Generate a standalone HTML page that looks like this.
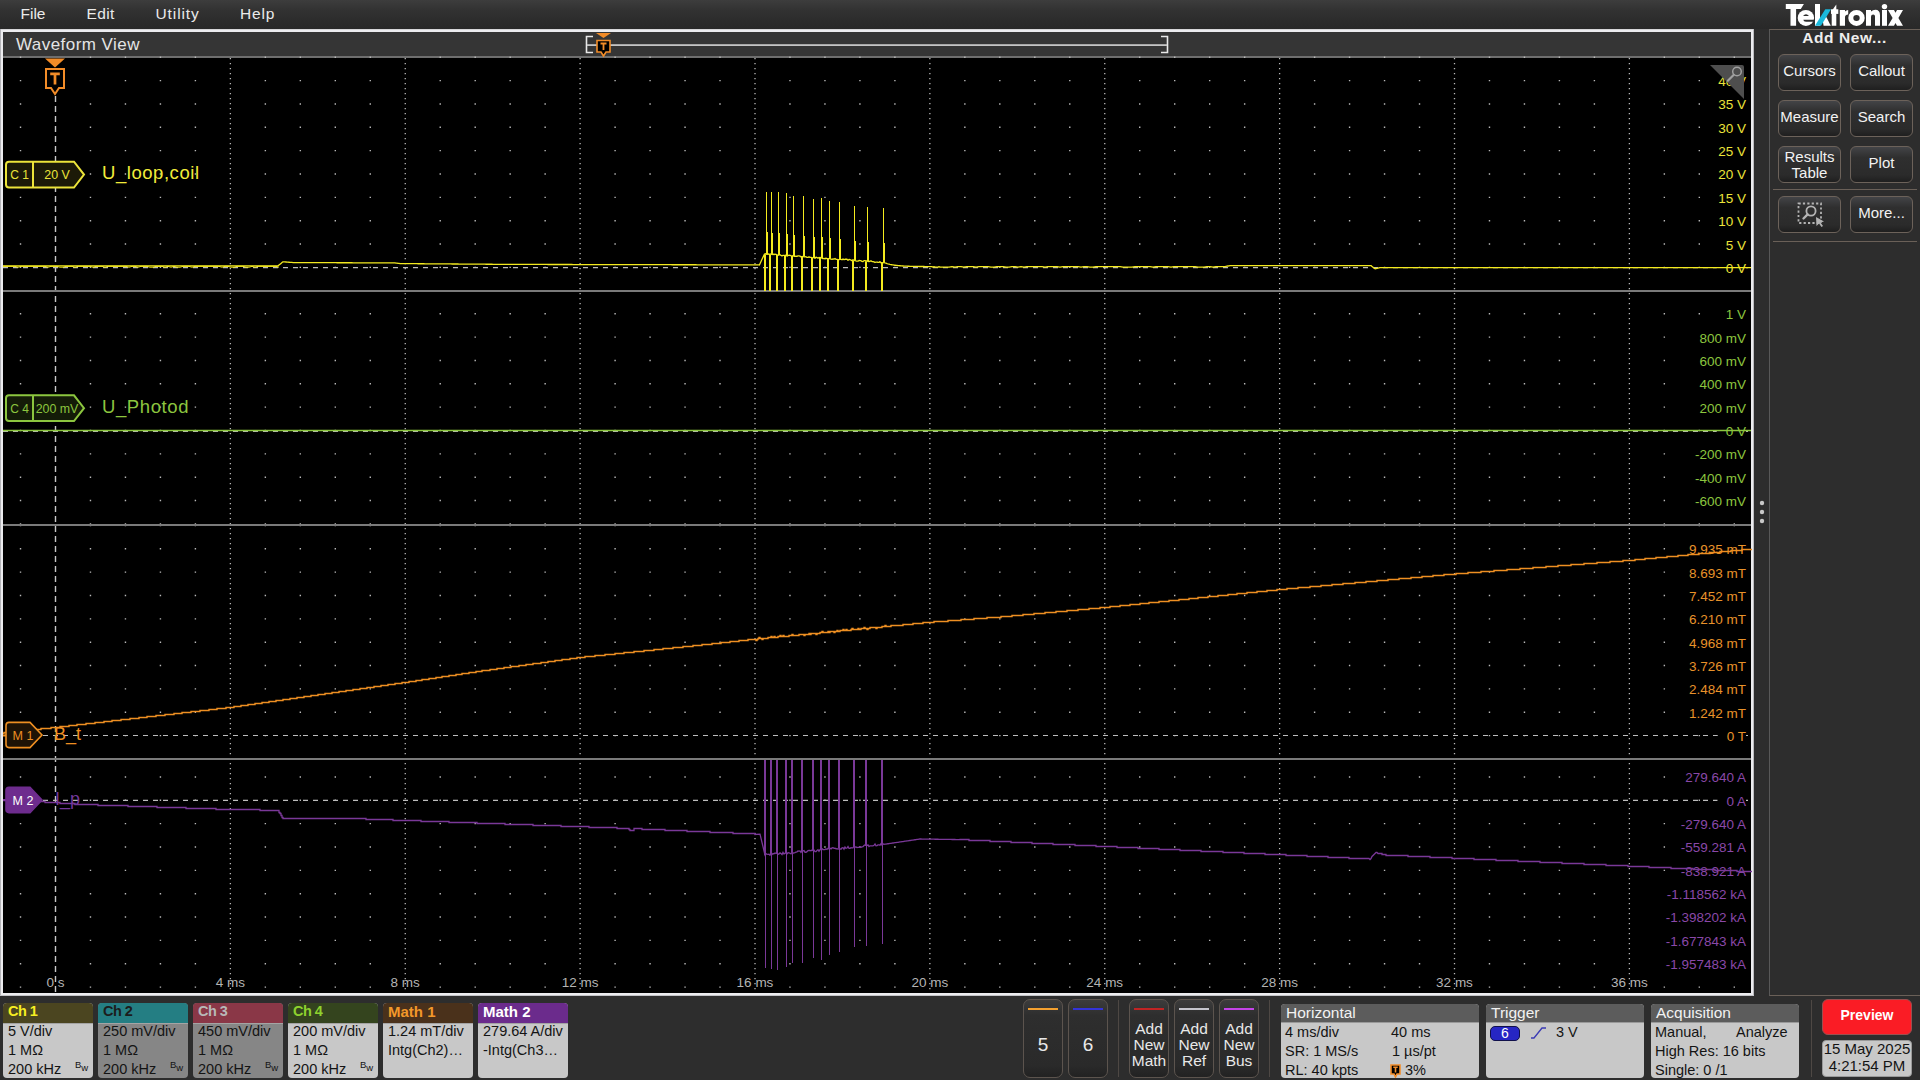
<!DOCTYPE html><html><head><meta charset="utf-8"><title>Waveform</title><style>
*{margin:0;padding:0;box-sizing:border-box}
html,body{width:1920px;height:1080px;overflow:hidden;background:#2d2d2d;font-family:"Liberation Sans",sans-serif;color:#e6e6e6}
.a{position:absolute}
#menu{left:0;top:0;width:1920px;height:29px;background:linear-gradient(#3d3d3d,#323232 35%,#2c2c2c 70%,#282828)}
#menu span{position:absolute;top:5px;font-size:15.5px;color:#eaeaea}
.btn{position:absolute;width:63px;height:37px;border:1px solid #6c625a;border-radius:6px;background:linear-gradient(#434447,#2f2f2f 30%,#2b2b2b 80%,#1f1f1f);color:#f2f2f2;font-size:15px;text-align:center;line-height:32px}
.bg{position:absolute;top:1003px;width:90px;height:75px;border-radius:4px;overflow:hidden;background:#c8c8c8}
.bg .h{height:20.5px;font-size:15px;font-weight:bold;line-height:17.5px;padding-left:5px;border-bottom:1.5px solid #a4a4a4}
.bg .r{position:absolute;left:5px;font-size:14.5px;color:#141414;white-space:nowrap}
.bb{position:absolute;top:999px;width:40px;height:79px;border:1px solid #5c544e;border-radius:7px;background:linear-gradient(#3c3c3c,#2e2e2e 20%,#2a2a2a 85%,#222);text-align:center;color:#e8e8e8}
.bb i{position:absolute;left:4px;right:4px;top:7.5px;height:2px}
.bb p{position:absolute;left:0;right:0;top:20.5px;font-size:15.5px;line-height:16px}
.pb{position:absolute;top:1004px;height:74px;border-radius:4px;overflow:hidden;background:#c8c8c8;color:#141414}
.pb .h{height:19px;background:#5c5c5c;color:#f2f2f2;font-size:15.5px;line-height:17px;padding-left:5px;border-bottom:1.5px solid #9a9a9a}
.pb .r{position:absolute;font-size:14.5px;white-space:nowrap}
</style></head><body><div id="menu" class="a"><span style="left:20.5px">File</span><span style="left:86.5px;letter-spacing:0.4px">Edit</span><span style="left:155.5px;letter-spacing:0.9px">Utility</span><span style="left:240px;letter-spacing:0.8px">Help</span></div><svg class="a" style="left:0;top:0" width="1920" height="1080" font-family='Liberation Sans, sans-serif'><rect x="0" y="29" width="1754" height="967" fill="#ececef"/><rect x="0" y="29" width="1754" height="1" fill="#d6d6d8"/><rect x="0" y="29" width="1" height="967" fill="#b4b4b8"/><rect x="1753" y="29" width="1" height="967" fill="#bcbcc0"/><rect x="0" y="995" width="1754" height="1" fill="#c4c4c8"/><rect x="3" y="32" width="1748" height="24" fill="#353535"/><rect x="3" y="56" width="1748" height="2" fill="#6e6e6e"/><rect x="3" y="58" width="1748" height="935" fill="#000"/><text x="16" y="49.5" font-size="17" letter-spacing="0.45" fill="#e4e4e4">Waveform View</text><path d="M593,36.5H586.5V52.5H593M1161,36.5H1167.5V52.5H1161" stroke="#e8e8e8" stroke-width="1.6" fill="none"/><rect x="587" y="44.2" width="580" height="1.8" fill="#c4c4c4"/><path d="M596,33H611L603.5,38Z" fill="#f28c28"/><path d="M597,40.5H610V52H606L603.5,56L601,52H597Z" fill="#000" stroke="#f28c28" stroke-width="1.6"/><path d="M600.5,43.5H606.5M603.5,43.5V50" stroke="#f28c28" stroke-width="1.8"/><rect x="3" y="290" width="1748" height="2" fill="#7a7a7a"/><rect x="3" y="524" width="1748" height="2" fill="#7a7a7a"/><rect x="3" y="758" width="1748" height="2" fill="#7a7a7a"/><path d="M19.82,56.55h1.4v1.4h-1.4zM89.77,56.55h1.4v1.4h-1.4zM124.75,56.55h1.4v1.4h-1.4zM159.73,56.55h1.4v1.4h-1.4zM194.7,56.55h1.4v1.4h-1.4zM264.65,56.55h1.4v1.4h-1.4zM299.63,56.55h1.4v1.4h-1.4zM334.6,56.55h1.4v1.4h-1.4zM369.58,56.55h1.4v1.4h-1.4zM439.53,56.55h1.4v1.4h-1.4zM474.5,56.55h1.4v1.4h-1.4zM509.48,56.55h1.4v1.4h-1.4zM544.45,56.55h1.4v1.4h-1.4zM614.4,56.55h1.4v1.4h-1.4zM649.38,56.55h1.4v1.4h-1.4zM684.35,56.55h1.4v1.4h-1.4zM719.32,56.55h1.4v1.4h-1.4zM789.27,56.55h1.4v1.4h-1.4zM824.25,56.55h1.4v1.4h-1.4zM859.23,56.55h1.4v1.4h-1.4zM894.2,56.55h1.4v1.4h-1.4zM964.15,56.55h1.4v1.4h-1.4zM999.12,56.55h1.4v1.4h-1.4zM1034.1,56.55h1.4v1.4h-1.4zM1069.08,56.55h1.4v1.4h-1.4zM1139.03,56.55h1.4v1.4h-1.4zM1174,56.55h1.4v1.4h-1.4zM1208.97,56.55h1.4v1.4h-1.4zM1243.95,56.55h1.4v1.4h-1.4zM1313.9,56.55h1.4v1.4h-1.4zM1348.88,56.55h1.4v1.4h-1.4zM1383.85,56.55h1.4v1.4h-1.4zM1418.83,56.55h1.4v1.4h-1.4zM1488.78,56.55h1.4v1.4h-1.4zM1523.75,56.55h1.4v1.4h-1.4zM1558.72,56.55h1.4v1.4h-1.4zM1593.7,56.55h1.4v1.4h-1.4zM1663.65,56.55h1.4v1.4h-1.4zM1698.62,56.55h1.4v1.4h-1.4zM1733.6,56.55h1.4v1.4h-1.4zM19.82,79.9h1.4v1.4h-1.4zM89.77,79.9h1.4v1.4h-1.4zM124.75,79.9h1.4v1.4h-1.4zM159.73,79.9h1.4v1.4h-1.4zM194.7,79.9h1.4v1.4h-1.4zM264.65,79.9h1.4v1.4h-1.4zM299.63,79.9h1.4v1.4h-1.4zM334.6,79.9h1.4v1.4h-1.4zM369.58,79.9h1.4v1.4h-1.4zM439.53,79.9h1.4v1.4h-1.4zM474.5,79.9h1.4v1.4h-1.4zM509.48,79.9h1.4v1.4h-1.4zM544.45,79.9h1.4v1.4h-1.4zM614.4,79.9h1.4v1.4h-1.4zM649.38,79.9h1.4v1.4h-1.4zM684.35,79.9h1.4v1.4h-1.4zM719.32,79.9h1.4v1.4h-1.4zM789.27,79.9h1.4v1.4h-1.4zM824.25,79.9h1.4v1.4h-1.4zM859.23,79.9h1.4v1.4h-1.4zM894.2,79.9h1.4v1.4h-1.4zM964.15,79.9h1.4v1.4h-1.4zM999.12,79.9h1.4v1.4h-1.4zM1034.1,79.9h1.4v1.4h-1.4zM1069.08,79.9h1.4v1.4h-1.4zM1139.03,79.9h1.4v1.4h-1.4zM1174,79.9h1.4v1.4h-1.4zM1208.97,79.9h1.4v1.4h-1.4zM1243.95,79.9h1.4v1.4h-1.4zM1313.9,79.9h1.4v1.4h-1.4zM1348.88,79.9h1.4v1.4h-1.4zM1383.85,79.9h1.4v1.4h-1.4zM1418.83,79.9h1.4v1.4h-1.4zM1488.78,79.9h1.4v1.4h-1.4zM1523.75,79.9h1.4v1.4h-1.4zM1558.72,79.9h1.4v1.4h-1.4zM1593.7,79.9h1.4v1.4h-1.4zM1663.65,79.9h1.4v1.4h-1.4zM1698.62,79.9h1.4v1.4h-1.4zM1733.6,79.9h1.4v1.4h-1.4zM19.82,103.25h1.4v1.4h-1.4zM89.77,103.25h1.4v1.4h-1.4zM124.75,103.25h1.4v1.4h-1.4zM159.73,103.25h1.4v1.4h-1.4zM194.7,103.25h1.4v1.4h-1.4zM264.65,103.25h1.4v1.4h-1.4zM299.63,103.25h1.4v1.4h-1.4zM334.6,103.25h1.4v1.4h-1.4zM369.58,103.25h1.4v1.4h-1.4zM439.53,103.25h1.4v1.4h-1.4zM474.5,103.25h1.4v1.4h-1.4zM509.48,103.25h1.4v1.4h-1.4zM544.45,103.25h1.4v1.4h-1.4zM614.4,103.25h1.4v1.4h-1.4zM649.38,103.25h1.4v1.4h-1.4zM684.35,103.25h1.4v1.4h-1.4zM719.32,103.25h1.4v1.4h-1.4zM789.27,103.25h1.4v1.4h-1.4zM824.25,103.25h1.4v1.4h-1.4zM859.23,103.25h1.4v1.4h-1.4zM894.2,103.25h1.4v1.4h-1.4zM964.15,103.25h1.4v1.4h-1.4zM999.12,103.25h1.4v1.4h-1.4zM1034.1,103.25h1.4v1.4h-1.4zM1069.08,103.25h1.4v1.4h-1.4zM1139.03,103.25h1.4v1.4h-1.4zM1174,103.25h1.4v1.4h-1.4zM1208.97,103.25h1.4v1.4h-1.4zM1243.95,103.25h1.4v1.4h-1.4zM1313.9,103.25h1.4v1.4h-1.4zM1348.88,103.25h1.4v1.4h-1.4zM1383.85,103.25h1.4v1.4h-1.4zM1418.83,103.25h1.4v1.4h-1.4zM1488.78,103.25h1.4v1.4h-1.4zM1523.75,103.25h1.4v1.4h-1.4zM1558.72,103.25h1.4v1.4h-1.4zM1593.7,103.25h1.4v1.4h-1.4zM1663.65,103.25h1.4v1.4h-1.4zM1698.62,103.25h1.4v1.4h-1.4zM1733.6,103.25h1.4v1.4h-1.4zM19.82,126.6h1.4v1.4h-1.4zM89.77,126.6h1.4v1.4h-1.4zM124.75,126.6h1.4v1.4h-1.4zM159.73,126.6h1.4v1.4h-1.4zM194.7,126.6h1.4v1.4h-1.4zM264.65,126.6h1.4v1.4h-1.4zM299.63,126.6h1.4v1.4h-1.4zM334.6,126.6h1.4v1.4h-1.4zM369.58,126.6h1.4v1.4h-1.4zM439.53,126.6h1.4v1.4h-1.4zM474.5,126.6h1.4v1.4h-1.4zM509.48,126.6h1.4v1.4h-1.4zM544.45,126.6h1.4v1.4h-1.4zM614.4,126.6h1.4v1.4h-1.4zM649.38,126.6h1.4v1.4h-1.4zM684.35,126.6h1.4v1.4h-1.4zM719.32,126.6h1.4v1.4h-1.4zM789.27,126.6h1.4v1.4h-1.4zM824.25,126.6h1.4v1.4h-1.4zM859.23,126.6h1.4v1.4h-1.4zM894.2,126.6h1.4v1.4h-1.4zM964.15,126.6h1.4v1.4h-1.4zM999.12,126.6h1.4v1.4h-1.4zM1034.1,126.6h1.4v1.4h-1.4zM1069.08,126.6h1.4v1.4h-1.4zM1139.03,126.6h1.4v1.4h-1.4zM1174,126.6h1.4v1.4h-1.4zM1208.97,126.6h1.4v1.4h-1.4zM1243.95,126.6h1.4v1.4h-1.4zM1313.9,126.6h1.4v1.4h-1.4zM1348.88,126.6h1.4v1.4h-1.4zM1383.85,126.6h1.4v1.4h-1.4zM1418.83,126.6h1.4v1.4h-1.4zM1488.78,126.6h1.4v1.4h-1.4zM1523.75,126.6h1.4v1.4h-1.4zM1558.72,126.6h1.4v1.4h-1.4zM1593.7,126.6h1.4v1.4h-1.4zM1663.65,126.6h1.4v1.4h-1.4zM1698.62,126.6h1.4v1.4h-1.4zM1733.6,126.6h1.4v1.4h-1.4zM19.82,149.95h1.4v1.4h-1.4zM89.77,149.95h1.4v1.4h-1.4zM124.75,149.95h1.4v1.4h-1.4zM159.73,149.95h1.4v1.4h-1.4zM194.7,149.95h1.4v1.4h-1.4zM264.65,149.95h1.4v1.4h-1.4zM299.63,149.95h1.4v1.4h-1.4zM334.6,149.95h1.4v1.4h-1.4zM369.58,149.95h1.4v1.4h-1.4zM439.53,149.95h1.4v1.4h-1.4zM474.5,149.95h1.4v1.4h-1.4zM509.48,149.95h1.4v1.4h-1.4zM544.45,149.95h1.4v1.4h-1.4zM614.4,149.95h1.4v1.4h-1.4zM649.38,149.95h1.4v1.4h-1.4zM684.35,149.95h1.4v1.4h-1.4zM719.32,149.95h1.4v1.4h-1.4zM789.27,149.95h1.4v1.4h-1.4zM824.25,149.95h1.4v1.4h-1.4zM859.23,149.95h1.4v1.4h-1.4zM894.2,149.95h1.4v1.4h-1.4zM964.15,149.95h1.4v1.4h-1.4zM999.12,149.95h1.4v1.4h-1.4zM1034.1,149.95h1.4v1.4h-1.4zM1069.08,149.95h1.4v1.4h-1.4zM1139.03,149.95h1.4v1.4h-1.4zM1174,149.95h1.4v1.4h-1.4zM1208.97,149.95h1.4v1.4h-1.4zM1243.95,149.95h1.4v1.4h-1.4zM1313.9,149.95h1.4v1.4h-1.4zM1348.88,149.95h1.4v1.4h-1.4zM1383.85,149.95h1.4v1.4h-1.4zM1418.83,149.95h1.4v1.4h-1.4zM1488.78,149.95h1.4v1.4h-1.4zM1523.75,149.95h1.4v1.4h-1.4zM1558.72,149.95h1.4v1.4h-1.4zM1593.7,149.95h1.4v1.4h-1.4zM1663.65,149.95h1.4v1.4h-1.4zM1698.62,149.95h1.4v1.4h-1.4zM1733.6,149.95h1.4v1.4h-1.4zM19.82,173.3h1.4v1.4h-1.4zM89.77,173.3h1.4v1.4h-1.4zM124.75,173.3h1.4v1.4h-1.4zM159.73,173.3h1.4v1.4h-1.4zM194.7,173.3h1.4v1.4h-1.4zM264.65,173.3h1.4v1.4h-1.4zM299.63,173.3h1.4v1.4h-1.4zM334.6,173.3h1.4v1.4h-1.4zM369.58,173.3h1.4v1.4h-1.4zM439.53,173.3h1.4v1.4h-1.4zM474.5,173.3h1.4v1.4h-1.4zM509.48,173.3h1.4v1.4h-1.4zM544.45,173.3h1.4v1.4h-1.4zM614.4,173.3h1.4v1.4h-1.4zM649.38,173.3h1.4v1.4h-1.4zM684.35,173.3h1.4v1.4h-1.4zM719.32,173.3h1.4v1.4h-1.4zM789.27,173.3h1.4v1.4h-1.4zM824.25,173.3h1.4v1.4h-1.4zM859.23,173.3h1.4v1.4h-1.4zM894.2,173.3h1.4v1.4h-1.4zM964.15,173.3h1.4v1.4h-1.4zM999.12,173.3h1.4v1.4h-1.4zM1034.1,173.3h1.4v1.4h-1.4zM1069.08,173.3h1.4v1.4h-1.4zM1139.03,173.3h1.4v1.4h-1.4zM1174,173.3h1.4v1.4h-1.4zM1208.97,173.3h1.4v1.4h-1.4zM1243.95,173.3h1.4v1.4h-1.4zM1313.9,173.3h1.4v1.4h-1.4zM1348.88,173.3h1.4v1.4h-1.4zM1383.85,173.3h1.4v1.4h-1.4zM1418.83,173.3h1.4v1.4h-1.4zM1488.78,173.3h1.4v1.4h-1.4zM1523.75,173.3h1.4v1.4h-1.4zM1558.72,173.3h1.4v1.4h-1.4zM1593.7,173.3h1.4v1.4h-1.4zM1663.65,173.3h1.4v1.4h-1.4zM1698.62,173.3h1.4v1.4h-1.4zM1733.6,173.3h1.4v1.4h-1.4zM19.82,196.65h1.4v1.4h-1.4zM89.77,196.65h1.4v1.4h-1.4zM124.75,196.65h1.4v1.4h-1.4zM159.73,196.65h1.4v1.4h-1.4zM194.7,196.65h1.4v1.4h-1.4zM264.65,196.65h1.4v1.4h-1.4zM299.63,196.65h1.4v1.4h-1.4zM334.6,196.65h1.4v1.4h-1.4zM369.58,196.65h1.4v1.4h-1.4zM439.53,196.65h1.4v1.4h-1.4zM474.5,196.65h1.4v1.4h-1.4zM509.48,196.65h1.4v1.4h-1.4zM544.45,196.65h1.4v1.4h-1.4zM614.4,196.65h1.4v1.4h-1.4zM649.38,196.65h1.4v1.4h-1.4zM684.35,196.65h1.4v1.4h-1.4zM719.32,196.65h1.4v1.4h-1.4zM789.27,196.65h1.4v1.4h-1.4zM824.25,196.65h1.4v1.4h-1.4zM859.23,196.65h1.4v1.4h-1.4zM894.2,196.65h1.4v1.4h-1.4zM964.15,196.65h1.4v1.4h-1.4zM999.12,196.65h1.4v1.4h-1.4zM1034.1,196.65h1.4v1.4h-1.4zM1069.08,196.65h1.4v1.4h-1.4zM1139.03,196.65h1.4v1.4h-1.4zM1174,196.65h1.4v1.4h-1.4zM1208.97,196.65h1.4v1.4h-1.4zM1243.95,196.65h1.4v1.4h-1.4zM1313.9,196.65h1.4v1.4h-1.4zM1348.88,196.65h1.4v1.4h-1.4zM1383.85,196.65h1.4v1.4h-1.4zM1418.83,196.65h1.4v1.4h-1.4zM1488.78,196.65h1.4v1.4h-1.4zM1523.75,196.65h1.4v1.4h-1.4zM1558.72,196.65h1.4v1.4h-1.4zM1593.7,196.65h1.4v1.4h-1.4zM1663.65,196.65h1.4v1.4h-1.4zM1698.62,196.65h1.4v1.4h-1.4zM1733.6,196.65h1.4v1.4h-1.4zM19.82,220h1.4v1.4h-1.4zM89.77,220h1.4v1.4h-1.4zM124.75,220h1.4v1.4h-1.4zM159.73,220h1.4v1.4h-1.4zM194.7,220h1.4v1.4h-1.4zM264.65,220h1.4v1.4h-1.4zM299.63,220h1.4v1.4h-1.4zM334.6,220h1.4v1.4h-1.4zM369.58,220h1.4v1.4h-1.4zM439.53,220h1.4v1.4h-1.4zM474.5,220h1.4v1.4h-1.4zM509.48,220h1.4v1.4h-1.4zM544.45,220h1.4v1.4h-1.4zM614.4,220h1.4v1.4h-1.4zM649.38,220h1.4v1.4h-1.4zM684.35,220h1.4v1.4h-1.4zM719.32,220h1.4v1.4h-1.4zM789.27,220h1.4v1.4h-1.4zM824.25,220h1.4v1.4h-1.4zM859.23,220h1.4v1.4h-1.4zM894.2,220h1.4v1.4h-1.4zM964.15,220h1.4v1.4h-1.4zM999.12,220h1.4v1.4h-1.4zM1034.1,220h1.4v1.4h-1.4zM1069.08,220h1.4v1.4h-1.4zM1139.03,220h1.4v1.4h-1.4zM1174,220h1.4v1.4h-1.4zM1208.97,220h1.4v1.4h-1.4zM1243.95,220h1.4v1.4h-1.4zM1313.9,220h1.4v1.4h-1.4zM1348.88,220h1.4v1.4h-1.4zM1383.85,220h1.4v1.4h-1.4zM1418.83,220h1.4v1.4h-1.4zM1488.78,220h1.4v1.4h-1.4zM1523.75,220h1.4v1.4h-1.4zM1558.72,220h1.4v1.4h-1.4zM1593.7,220h1.4v1.4h-1.4zM1663.65,220h1.4v1.4h-1.4zM1698.62,220h1.4v1.4h-1.4zM1733.6,220h1.4v1.4h-1.4zM19.82,243.35h1.4v1.4h-1.4zM89.77,243.35h1.4v1.4h-1.4zM124.75,243.35h1.4v1.4h-1.4zM159.73,243.35h1.4v1.4h-1.4zM194.7,243.35h1.4v1.4h-1.4zM264.65,243.35h1.4v1.4h-1.4zM299.63,243.35h1.4v1.4h-1.4zM334.6,243.35h1.4v1.4h-1.4zM369.58,243.35h1.4v1.4h-1.4zM439.53,243.35h1.4v1.4h-1.4zM474.5,243.35h1.4v1.4h-1.4zM509.48,243.35h1.4v1.4h-1.4zM544.45,243.35h1.4v1.4h-1.4zM614.4,243.35h1.4v1.4h-1.4zM649.38,243.35h1.4v1.4h-1.4zM684.35,243.35h1.4v1.4h-1.4zM719.32,243.35h1.4v1.4h-1.4zM789.27,243.35h1.4v1.4h-1.4zM824.25,243.35h1.4v1.4h-1.4zM859.23,243.35h1.4v1.4h-1.4zM894.2,243.35h1.4v1.4h-1.4zM964.15,243.35h1.4v1.4h-1.4zM999.12,243.35h1.4v1.4h-1.4zM1034.1,243.35h1.4v1.4h-1.4zM1069.08,243.35h1.4v1.4h-1.4zM1139.03,243.35h1.4v1.4h-1.4zM1174,243.35h1.4v1.4h-1.4zM1208.97,243.35h1.4v1.4h-1.4zM1243.95,243.35h1.4v1.4h-1.4zM1313.9,243.35h1.4v1.4h-1.4zM1348.88,243.35h1.4v1.4h-1.4zM1383.85,243.35h1.4v1.4h-1.4zM1418.83,243.35h1.4v1.4h-1.4zM1488.78,243.35h1.4v1.4h-1.4zM1523.75,243.35h1.4v1.4h-1.4zM1558.72,243.35h1.4v1.4h-1.4zM1593.7,243.35h1.4v1.4h-1.4zM1663.65,243.35h1.4v1.4h-1.4zM1698.62,243.35h1.4v1.4h-1.4zM1733.6,243.35h1.4v1.4h-1.4zM19.82,266.7h1.4v1.4h-1.4zM89.77,266.7h1.4v1.4h-1.4zM124.75,266.7h1.4v1.4h-1.4zM159.73,266.7h1.4v1.4h-1.4zM194.7,266.7h1.4v1.4h-1.4zM264.65,266.7h1.4v1.4h-1.4zM299.63,266.7h1.4v1.4h-1.4zM334.6,266.7h1.4v1.4h-1.4zM369.58,266.7h1.4v1.4h-1.4zM439.53,266.7h1.4v1.4h-1.4zM474.5,266.7h1.4v1.4h-1.4zM509.48,266.7h1.4v1.4h-1.4zM544.45,266.7h1.4v1.4h-1.4zM614.4,266.7h1.4v1.4h-1.4zM649.38,266.7h1.4v1.4h-1.4zM684.35,266.7h1.4v1.4h-1.4zM719.32,266.7h1.4v1.4h-1.4zM789.27,266.7h1.4v1.4h-1.4zM824.25,266.7h1.4v1.4h-1.4zM859.23,266.7h1.4v1.4h-1.4zM894.2,266.7h1.4v1.4h-1.4zM964.15,266.7h1.4v1.4h-1.4zM999.12,266.7h1.4v1.4h-1.4zM1034.1,266.7h1.4v1.4h-1.4zM1069.08,266.7h1.4v1.4h-1.4zM1139.03,266.7h1.4v1.4h-1.4zM1174,266.7h1.4v1.4h-1.4zM1208.97,266.7h1.4v1.4h-1.4zM1243.95,266.7h1.4v1.4h-1.4zM1313.9,266.7h1.4v1.4h-1.4zM1348.88,266.7h1.4v1.4h-1.4zM1383.85,266.7h1.4v1.4h-1.4zM1418.83,266.7h1.4v1.4h-1.4zM1488.78,266.7h1.4v1.4h-1.4zM1523.75,266.7h1.4v1.4h-1.4zM1558.72,266.7h1.4v1.4h-1.4zM1593.7,266.7h1.4v1.4h-1.4zM1663.65,266.7h1.4v1.4h-1.4zM1698.62,266.7h1.4v1.4h-1.4zM1733.6,266.7h1.4v1.4h-1.4zM19.82,290.05h1.4v1.4h-1.4zM89.77,290.05h1.4v1.4h-1.4zM124.75,290.05h1.4v1.4h-1.4zM159.73,290.05h1.4v1.4h-1.4zM194.7,290.05h1.4v1.4h-1.4zM264.65,290.05h1.4v1.4h-1.4zM299.63,290.05h1.4v1.4h-1.4zM334.6,290.05h1.4v1.4h-1.4zM369.58,290.05h1.4v1.4h-1.4zM439.53,290.05h1.4v1.4h-1.4zM474.5,290.05h1.4v1.4h-1.4zM509.48,290.05h1.4v1.4h-1.4zM544.45,290.05h1.4v1.4h-1.4zM614.4,290.05h1.4v1.4h-1.4zM649.38,290.05h1.4v1.4h-1.4zM684.35,290.05h1.4v1.4h-1.4zM719.32,290.05h1.4v1.4h-1.4zM789.27,290.05h1.4v1.4h-1.4zM824.25,290.05h1.4v1.4h-1.4zM859.23,290.05h1.4v1.4h-1.4zM894.2,290.05h1.4v1.4h-1.4zM964.15,290.05h1.4v1.4h-1.4zM999.12,290.05h1.4v1.4h-1.4zM1034.1,290.05h1.4v1.4h-1.4zM1069.08,290.05h1.4v1.4h-1.4zM1139.03,290.05h1.4v1.4h-1.4zM1174,290.05h1.4v1.4h-1.4zM1208.97,290.05h1.4v1.4h-1.4zM1243.95,290.05h1.4v1.4h-1.4zM1313.9,290.05h1.4v1.4h-1.4zM1348.88,290.05h1.4v1.4h-1.4zM1383.85,290.05h1.4v1.4h-1.4zM1418.83,290.05h1.4v1.4h-1.4zM1488.78,290.05h1.4v1.4h-1.4zM1523.75,290.05h1.4v1.4h-1.4zM1558.72,290.05h1.4v1.4h-1.4zM1593.7,290.05h1.4v1.4h-1.4zM1663.65,290.05h1.4v1.4h-1.4zM1698.62,290.05h1.4v1.4h-1.4zM1733.6,290.05h1.4v1.4h-1.4zM19.82,313.05h1.4v1.4h-1.4zM89.77,313.05h1.4v1.4h-1.4zM124.75,313.05h1.4v1.4h-1.4zM159.73,313.05h1.4v1.4h-1.4zM194.7,313.05h1.4v1.4h-1.4zM264.65,313.05h1.4v1.4h-1.4zM299.63,313.05h1.4v1.4h-1.4zM334.6,313.05h1.4v1.4h-1.4zM369.58,313.05h1.4v1.4h-1.4zM439.53,313.05h1.4v1.4h-1.4zM474.5,313.05h1.4v1.4h-1.4zM509.48,313.05h1.4v1.4h-1.4zM544.45,313.05h1.4v1.4h-1.4zM614.4,313.05h1.4v1.4h-1.4zM649.38,313.05h1.4v1.4h-1.4zM684.35,313.05h1.4v1.4h-1.4zM719.32,313.05h1.4v1.4h-1.4zM789.27,313.05h1.4v1.4h-1.4zM824.25,313.05h1.4v1.4h-1.4zM859.23,313.05h1.4v1.4h-1.4zM894.2,313.05h1.4v1.4h-1.4zM964.15,313.05h1.4v1.4h-1.4zM999.12,313.05h1.4v1.4h-1.4zM1034.1,313.05h1.4v1.4h-1.4zM1069.08,313.05h1.4v1.4h-1.4zM1139.03,313.05h1.4v1.4h-1.4zM1174,313.05h1.4v1.4h-1.4zM1208.97,313.05h1.4v1.4h-1.4zM1243.95,313.05h1.4v1.4h-1.4zM1313.9,313.05h1.4v1.4h-1.4zM1348.88,313.05h1.4v1.4h-1.4zM1383.85,313.05h1.4v1.4h-1.4zM1418.83,313.05h1.4v1.4h-1.4zM1488.78,313.05h1.4v1.4h-1.4zM1523.75,313.05h1.4v1.4h-1.4zM1558.72,313.05h1.4v1.4h-1.4zM1593.7,313.05h1.4v1.4h-1.4zM1663.65,313.05h1.4v1.4h-1.4zM1698.62,313.05h1.4v1.4h-1.4zM1733.6,313.05h1.4v1.4h-1.4zM19.82,336.4h1.4v1.4h-1.4zM89.77,336.4h1.4v1.4h-1.4zM124.75,336.4h1.4v1.4h-1.4zM159.73,336.4h1.4v1.4h-1.4zM194.7,336.4h1.4v1.4h-1.4zM264.65,336.4h1.4v1.4h-1.4zM299.63,336.4h1.4v1.4h-1.4zM334.6,336.4h1.4v1.4h-1.4zM369.58,336.4h1.4v1.4h-1.4zM439.53,336.4h1.4v1.4h-1.4zM474.5,336.4h1.4v1.4h-1.4zM509.48,336.4h1.4v1.4h-1.4zM544.45,336.4h1.4v1.4h-1.4zM614.4,336.4h1.4v1.4h-1.4zM649.38,336.4h1.4v1.4h-1.4zM684.35,336.4h1.4v1.4h-1.4zM719.32,336.4h1.4v1.4h-1.4zM789.27,336.4h1.4v1.4h-1.4zM824.25,336.4h1.4v1.4h-1.4zM859.23,336.4h1.4v1.4h-1.4zM894.2,336.4h1.4v1.4h-1.4zM964.15,336.4h1.4v1.4h-1.4zM999.12,336.4h1.4v1.4h-1.4zM1034.1,336.4h1.4v1.4h-1.4zM1069.08,336.4h1.4v1.4h-1.4zM1139.03,336.4h1.4v1.4h-1.4zM1174,336.4h1.4v1.4h-1.4zM1208.97,336.4h1.4v1.4h-1.4zM1243.95,336.4h1.4v1.4h-1.4zM1313.9,336.4h1.4v1.4h-1.4zM1348.88,336.4h1.4v1.4h-1.4zM1383.85,336.4h1.4v1.4h-1.4zM1418.83,336.4h1.4v1.4h-1.4zM1488.78,336.4h1.4v1.4h-1.4zM1523.75,336.4h1.4v1.4h-1.4zM1558.72,336.4h1.4v1.4h-1.4zM1593.7,336.4h1.4v1.4h-1.4zM1663.65,336.4h1.4v1.4h-1.4zM1698.62,336.4h1.4v1.4h-1.4zM1733.6,336.4h1.4v1.4h-1.4zM19.82,359.75h1.4v1.4h-1.4zM89.77,359.75h1.4v1.4h-1.4zM124.75,359.75h1.4v1.4h-1.4zM159.73,359.75h1.4v1.4h-1.4zM194.7,359.75h1.4v1.4h-1.4zM264.65,359.75h1.4v1.4h-1.4zM299.63,359.75h1.4v1.4h-1.4zM334.6,359.75h1.4v1.4h-1.4zM369.58,359.75h1.4v1.4h-1.4zM439.53,359.75h1.4v1.4h-1.4zM474.5,359.75h1.4v1.4h-1.4zM509.48,359.75h1.4v1.4h-1.4zM544.45,359.75h1.4v1.4h-1.4zM614.4,359.75h1.4v1.4h-1.4zM649.38,359.75h1.4v1.4h-1.4zM684.35,359.75h1.4v1.4h-1.4zM719.32,359.75h1.4v1.4h-1.4zM789.27,359.75h1.4v1.4h-1.4zM824.25,359.75h1.4v1.4h-1.4zM859.23,359.75h1.4v1.4h-1.4zM894.2,359.75h1.4v1.4h-1.4zM964.15,359.75h1.4v1.4h-1.4zM999.12,359.75h1.4v1.4h-1.4zM1034.1,359.75h1.4v1.4h-1.4zM1069.08,359.75h1.4v1.4h-1.4zM1139.03,359.75h1.4v1.4h-1.4zM1174,359.75h1.4v1.4h-1.4zM1208.97,359.75h1.4v1.4h-1.4zM1243.95,359.75h1.4v1.4h-1.4zM1313.9,359.75h1.4v1.4h-1.4zM1348.88,359.75h1.4v1.4h-1.4zM1383.85,359.75h1.4v1.4h-1.4zM1418.83,359.75h1.4v1.4h-1.4zM1488.78,359.75h1.4v1.4h-1.4zM1523.75,359.75h1.4v1.4h-1.4zM1558.72,359.75h1.4v1.4h-1.4zM1593.7,359.75h1.4v1.4h-1.4zM1663.65,359.75h1.4v1.4h-1.4zM1698.62,359.75h1.4v1.4h-1.4zM1733.6,359.75h1.4v1.4h-1.4zM19.82,383.1h1.4v1.4h-1.4zM89.77,383.1h1.4v1.4h-1.4zM124.75,383.1h1.4v1.4h-1.4zM159.73,383.1h1.4v1.4h-1.4zM194.7,383.1h1.4v1.4h-1.4zM264.65,383.1h1.4v1.4h-1.4zM299.63,383.1h1.4v1.4h-1.4zM334.6,383.1h1.4v1.4h-1.4zM369.58,383.1h1.4v1.4h-1.4zM439.53,383.1h1.4v1.4h-1.4zM474.5,383.1h1.4v1.4h-1.4zM509.48,383.1h1.4v1.4h-1.4zM544.45,383.1h1.4v1.4h-1.4zM614.4,383.1h1.4v1.4h-1.4zM649.38,383.1h1.4v1.4h-1.4zM684.35,383.1h1.4v1.4h-1.4zM719.32,383.1h1.4v1.4h-1.4zM789.27,383.1h1.4v1.4h-1.4zM824.25,383.1h1.4v1.4h-1.4zM859.23,383.1h1.4v1.4h-1.4zM894.2,383.1h1.4v1.4h-1.4zM964.15,383.1h1.4v1.4h-1.4zM999.12,383.1h1.4v1.4h-1.4zM1034.1,383.1h1.4v1.4h-1.4zM1069.08,383.1h1.4v1.4h-1.4zM1139.03,383.1h1.4v1.4h-1.4zM1174,383.1h1.4v1.4h-1.4zM1208.97,383.1h1.4v1.4h-1.4zM1243.95,383.1h1.4v1.4h-1.4zM1313.9,383.1h1.4v1.4h-1.4zM1348.88,383.1h1.4v1.4h-1.4zM1383.85,383.1h1.4v1.4h-1.4zM1418.83,383.1h1.4v1.4h-1.4zM1488.78,383.1h1.4v1.4h-1.4zM1523.75,383.1h1.4v1.4h-1.4zM1558.72,383.1h1.4v1.4h-1.4zM1593.7,383.1h1.4v1.4h-1.4zM1663.65,383.1h1.4v1.4h-1.4zM1698.62,383.1h1.4v1.4h-1.4zM1733.6,383.1h1.4v1.4h-1.4zM19.82,406.45h1.4v1.4h-1.4zM89.77,406.45h1.4v1.4h-1.4zM124.75,406.45h1.4v1.4h-1.4zM159.73,406.45h1.4v1.4h-1.4zM194.7,406.45h1.4v1.4h-1.4zM264.65,406.45h1.4v1.4h-1.4zM299.63,406.45h1.4v1.4h-1.4zM334.6,406.45h1.4v1.4h-1.4zM369.58,406.45h1.4v1.4h-1.4zM439.53,406.45h1.4v1.4h-1.4zM474.5,406.45h1.4v1.4h-1.4zM509.48,406.45h1.4v1.4h-1.4zM544.45,406.45h1.4v1.4h-1.4zM614.4,406.45h1.4v1.4h-1.4zM649.38,406.45h1.4v1.4h-1.4zM684.35,406.45h1.4v1.4h-1.4zM719.32,406.45h1.4v1.4h-1.4zM789.27,406.45h1.4v1.4h-1.4zM824.25,406.45h1.4v1.4h-1.4zM859.23,406.45h1.4v1.4h-1.4zM894.2,406.45h1.4v1.4h-1.4zM964.15,406.45h1.4v1.4h-1.4zM999.12,406.45h1.4v1.4h-1.4zM1034.1,406.45h1.4v1.4h-1.4zM1069.08,406.45h1.4v1.4h-1.4zM1139.03,406.45h1.4v1.4h-1.4zM1174,406.45h1.4v1.4h-1.4zM1208.97,406.45h1.4v1.4h-1.4zM1243.95,406.45h1.4v1.4h-1.4zM1313.9,406.45h1.4v1.4h-1.4zM1348.88,406.45h1.4v1.4h-1.4zM1383.85,406.45h1.4v1.4h-1.4zM1418.83,406.45h1.4v1.4h-1.4zM1488.78,406.45h1.4v1.4h-1.4zM1523.75,406.45h1.4v1.4h-1.4zM1558.72,406.45h1.4v1.4h-1.4zM1593.7,406.45h1.4v1.4h-1.4zM1663.65,406.45h1.4v1.4h-1.4zM1698.62,406.45h1.4v1.4h-1.4zM1733.6,406.45h1.4v1.4h-1.4zM19.82,429.8h1.4v1.4h-1.4zM89.77,429.8h1.4v1.4h-1.4zM124.75,429.8h1.4v1.4h-1.4zM159.73,429.8h1.4v1.4h-1.4zM194.7,429.8h1.4v1.4h-1.4zM264.65,429.8h1.4v1.4h-1.4zM299.63,429.8h1.4v1.4h-1.4zM334.6,429.8h1.4v1.4h-1.4zM369.58,429.8h1.4v1.4h-1.4zM439.53,429.8h1.4v1.4h-1.4zM474.5,429.8h1.4v1.4h-1.4zM509.48,429.8h1.4v1.4h-1.4zM544.45,429.8h1.4v1.4h-1.4zM614.4,429.8h1.4v1.4h-1.4zM649.38,429.8h1.4v1.4h-1.4zM684.35,429.8h1.4v1.4h-1.4zM719.32,429.8h1.4v1.4h-1.4zM789.27,429.8h1.4v1.4h-1.4zM824.25,429.8h1.4v1.4h-1.4zM859.23,429.8h1.4v1.4h-1.4zM894.2,429.8h1.4v1.4h-1.4zM964.15,429.8h1.4v1.4h-1.4zM999.12,429.8h1.4v1.4h-1.4zM1034.1,429.8h1.4v1.4h-1.4zM1069.08,429.8h1.4v1.4h-1.4zM1139.03,429.8h1.4v1.4h-1.4zM1174,429.8h1.4v1.4h-1.4zM1208.97,429.8h1.4v1.4h-1.4zM1243.95,429.8h1.4v1.4h-1.4zM1313.9,429.8h1.4v1.4h-1.4zM1348.88,429.8h1.4v1.4h-1.4zM1383.85,429.8h1.4v1.4h-1.4zM1418.83,429.8h1.4v1.4h-1.4zM1488.78,429.8h1.4v1.4h-1.4zM1523.75,429.8h1.4v1.4h-1.4zM1558.72,429.8h1.4v1.4h-1.4zM1593.7,429.8h1.4v1.4h-1.4zM1663.65,429.8h1.4v1.4h-1.4zM1698.62,429.8h1.4v1.4h-1.4zM1733.6,429.8h1.4v1.4h-1.4zM19.82,453.15h1.4v1.4h-1.4zM89.77,453.15h1.4v1.4h-1.4zM124.75,453.15h1.4v1.4h-1.4zM159.73,453.15h1.4v1.4h-1.4zM194.7,453.15h1.4v1.4h-1.4zM264.65,453.15h1.4v1.4h-1.4zM299.63,453.15h1.4v1.4h-1.4zM334.6,453.15h1.4v1.4h-1.4zM369.58,453.15h1.4v1.4h-1.4zM439.53,453.15h1.4v1.4h-1.4zM474.5,453.15h1.4v1.4h-1.4zM509.48,453.15h1.4v1.4h-1.4zM544.45,453.15h1.4v1.4h-1.4zM614.4,453.15h1.4v1.4h-1.4zM649.38,453.15h1.4v1.4h-1.4zM684.35,453.15h1.4v1.4h-1.4zM719.32,453.15h1.4v1.4h-1.4zM789.27,453.15h1.4v1.4h-1.4zM824.25,453.15h1.4v1.4h-1.4zM859.23,453.15h1.4v1.4h-1.4zM894.2,453.15h1.4v1.4h-1.4zM964.15,453.15h1.4v1.4h-1.4zM999.12,453.15h1.4v1.4h-1.4zM1034.1,453.15h1.4v1.4h-1.4zM1069.08,453.15h1.4v1.4h-1.4zM1139.03,453.15h1.4v1.4h-1.4zM1174,453.15h1.4v1.4h-1.4zM1208.97,453.15h1.4v1.4h-1.4zM1243.95,453.15h1.4v1.4h-1.4zM1313.9,453.15h1.4v1.4h-1.4zM1348.88,453.15h1.4v1.4h-1.4zM1383.85,453.15h1.4v1.4h-1.4zM1418.83,453.15h1.4v1.4h-1.4zM1488.78,453.15h1.4v1.4h-1.4zM1523.75,453.15h1.4v1.4h-1.4zM1558.72,453.15h1.4v1.4h-1.4zM1593.7,453.15h1.4v1.4h-1.4zM1663.65,453.15h1.4v1.4h-1.4zM1698.62,453.15h1.4v1.4h-1.4zM1733.6,453.15h1.4v1.4h-1.4zM19.82,476.5h1.4v1.4h-1.4zM89.77,476.5h1.4v1.4h-1.4zM124.75,476.5h1.4v1.4h-1.4zM159.73,476.5h1.4v1.4h-1.4zM194.7,476.5h1.4v1.4h-1.4zM264.65,476.5h1.4v1.4h-1.4zM299.63,476.5h1.4v1.4h-1.4zM334.6,476.5h1.4v1.4h-1.4zM369.58,476.5h1.4v1.4h-1.4zM439.53,476.5h1.4v1.4h-1.4zM474.5,476.5h1.4v1.4h-1.4zM509.48,476.5h1.4v1.4h-1.4zM544.45,476.5h1.4v1.4h-1.4zM614.4,476.5h1.4v1.4h-1.4zM649.38,476.5h1.4v1.4h-1.4zM684.35,476.5h1.4v1.4h-1.4zM719.32,476.5h1.4v1.4h-1.4zM789.27,476.5h1.4v1.4h-1.4zM824.25,476.5h1.4v1.4h-1.4zM859.23,476.5h1.4v1.4h-1.4zM894.2,476.5h1.4v1.4h-1.4zM964.15,476.5h1.4v1.4h-1.4zM999.12,476.5h1.4v1.4h-1.4zM1034.1,476.5h1.4v1.4h-1.4zM1069.08,476.5h1.4v1.4h-1.4zM1139.03,476.5h1.4v1.4h-1.4zM1174,476.5h1.4v1.4h-1.4zM1208.97,476.5h1.4v1.4h-1.4zM1243.95,476.5h1.4v1.4h-1.4zM1313.9,476.5h1.4v1.4h-1.4zM1348.88,476.5h1.4v1.4h-1.4zM1383.85,476.5h1.4v1.4h-1.4zM1418.83,476.5h1.4v1.4h-1.4zM1488.78,476.5h1.4v1.4h-1.4zM1523.75,476.5h1.4v1.4h-1.4zM1558.72,476.5h1.4v1.4h-1.4zM1593.7,476.5h1.4v1.4h-1.4zM1663.65,476.5h1.4v1.4h-1.4zM1698.62,476.5h1.4v1.4h-1.4zM1733.6,476.5h1.4v1.4h-1.4zM19.82,499.85h1.4v1.4h-1.4zM89.77,499.85h1.4v1.4h-1.4zM124.75,499.85h1.4v1.4h-1.4zM159.73,499.85h1.4v1.4h-1.4zM194.7,499.85h1.4v1.4h-1.4zM264.65,499.85h1.4v1.4h-1.4zM299.63,499.85h1.4v1.4h-1.4zM334.6,499.85h1.4v1.4h-1.4zM369.58,499.85h1.4v1.4h-1.4zM439.53,499.85h1.4v1.4h-1.4zM474.5,499.85h1.4v1.4h-1.4zM509.48,499.85h1.4v1.4h-1.4zM544.45,499.85h1.4v1.4h-1.4zM614.4,499.85h1.4v1.4h-1.4zM649.38,499.85h1.4v1.4h-1.4zM684.35,499.85h1.4v1.4h-1.4zM719.32,499.85h1.4v1.4h-1.4zM789.27,499.85h1.4v1.4h-1.4zM824.25,499.85h1.4v1.4h-1.4zM859.23,499.85h1.4v1.4h-1.4zM894.2,499.85h1.4v1.4h-1.4zM964.15,499.85h1.4v1.4h-1.4zM999.12,499.85h1.4v1.4h-1.4zM1034.1,499.85h1.4v1.4h-1.4zM1069.08,499.85h1.4v1.4h-1.4zM1139.03,499.85h1.4v1.4h-1.4zM1174,499.85h1.4v1.4h-1.4zM1208.97,499.85h1.4v1.4h-1.4zM1243.95,499.85h1.4v1.4h-1.4zM1313.9,499.85h1.4v1.4h-1.4zM1348.88,499.85h1.4v1.4h-1.4zM1383.85,499.85h1.4v1.4h-1.4zM1418.83,499.85h1.4v1.4h-1.4zM1488.78,499.85h1.4v1.4h-1.4zM1523.75,499.85h1.4v1.4h-1.4zM1558.72,499.85h1.4v1.4h-1.4zM1593.7,499.85h1.4v1.4h-1.4zM1663.65,499.85h1.4v1.4h-1.4zM1698.62,499.85h1.4v1.4h-1.4zM1733.6,499.85h1.4v1.4h-1.4zM19.82,523.2h1.4v1.4h-1.4zM89.77,523.2h1.4v1.4h-1.4zM124.75,523.2h1.4v1.4h-1.4zM159.73,523.2h1.4v1.4h-1.4zM194.7,523.2h1.4v1.4h-1.4zM264.65,523.2h1.4v1.4h-1.4zM299.63,523.2h1.4v1.4h-1.4zM334.6,523.2h1.4v1.4h-1.4zM369.58,523.2h1.4v1.4h-1.4zM439.53,523.2h1.4v1.4h-1.4zM474.5,523.2h1.4v1.4h-1.4zM509.48,523.2h1.4v1.4h-1.4zM544.45,523.2h1.4v1.4h-1.4zM614.4,523.2h1.4v1.4h-1.4zM649.38,523.2h1.4v1.4h-1.4zM684.35,523.2h1.4v1.4h-1.4zM719.32,523.2h1.4v1.4h-1.4zM789.27,523.2h1.4v1.4h-1.4zM824.25,523.2h1.4v1.4h-1.4zM859.23,523.2h1.4v1.4h-1.4zM894.2,523.2h1.4v1.4h-1.4zM964.15,523.2h1.4v1.4h-1.4zM999.12,523.2h1.4v1.4h-1.4zM1034.1,523.2h1.4v1.4h-1.4zM1069.08,523.2h1.4v1.4h-1.4zM1139.03,523.2h1.4v1.4h-1.4zM1174,523.2h1.4v1.4h-1.4zM1208.97,523.2h1.4v1.4h-1.4zM1243.95,523.2h1.4v1.4h-1.4zM1313.9,523.2h1.4v1.4h-1.4zM1348.88,523.2h1.4v1.4h-1.4zM1383.85,523.2h1.4v1.4h-1.4zM1418.83,523.2h1.4v1.4h-1.4zM1488.78,523.2h1.4v1.4h-1.4zM1523.75,523.2h1.4v1.4h-1.4zM1558.72,523.2h1.4v1.4h-1.4zM1593.7,523.2h1.4v1.4h-1.4zM1663.65,523.2h1.4v1.4h-1.4zM1698.62,523.2h1.4v1.4h-1.4zM1733.6,523.2h1.4v1.4h-1.4zM19.82,524.75h1.4v1.4h-1.4zM89.77,524.75h1.4v1.4h-1.4zM124.75,524.75h1.4v1.4h-1.4zM159.73,524.75h1.4v1.4h-1.4zM194.7,524.75h1.4v1.4h-1.4zM264.65,524.75h1.4v1.4h-1.4zM299.63,524.75h1.4v1.4h-1.4zM334.6,524.75h1.4v1.4h-1.4zM369.58,524.75h1.4v1.4h-1.4zM439.53,524.75h1.4v1.4h-1.4zM474.5,524.75h1.4v1.4h-1.4zM509.48,524.75h1.4v1.4h-1.4zM544.45,524.75h1.4v1.4h-1.4zM614.4,524.75h1.4v1.4h-1.4zM649.38,524.75h1.4v1.4h-1.4zM684.35,524.75h1.4v1.4h-1.4zM719.32,524.75h1.4v1.4h-1.4zM789.27,524.75h1.4v1.4h-1.4zM824.25,524.75h1.4v1.4h-1.4zM859.23,524.75h1.4v1.4h-1.4zM894.2,524.75h1.4v1.4h-1.4zM964.15,524.75h1.4v1.4h-1.4zM999.12,524.75h1.4v1.4h-1.4zM1034.1,524.75h1.4v1.4h-1.4zM1069.08,524.75h1.4v1.4h-1.4zM1139.03,524.75h1.4v1.4h-1.4zM1174,524.75h1.4v1.4h-1.4zM1208.97,524.75h1.4v1.4h-1.4zM1243.95,524.75h1.4v1.4h-1.4zM1313.9,524.75h1.4v1.4h-1.4zM1348.88,524.75h1.4v1.4h-1.4zM1383.85,524.75h1.4v1.4h-1.4zM1418.83,524.75h1.4v1.4h-1.4zM1488.78,524.75h1.4v1.4h-1.4zM1523.75,524.75h1.4v1.4h-1.4zM1558.72,524.75h1.4v1.4h-1.4zM1593.7,524.75h1.4v1.4h-1.4zM1663.65,524.75h1.4v1.4h-1.4zM1698.62,524.75h1.4v1.4h-1.4zM1733.6,524.75h1.4v1.4h-1.4zM19.82,548.1h1.4v1.4h-1.4zM89.77,548.1h1.4v1.4h-1.4zM124.75,548.1h1.4v1.4h-1.4zM159.73,548.1h1.4v1.4h-1.4zM194.7,548.1h1.4v1.4h-1.4zM264.65,548.1h1.4v1.4h-1.4zM299.63,548.1h1.4v1.4h-1.4zM334.6,548.1h1.4v1.4h-1.4zM369.58,548.1h1.4v1.4h-1.4zM439.53,548.1h1.4v1.4h-1.4zM474.5,548.1h1.4v1.4h-1.4zM509.48,548.1h1.4v1.4h-1.4zM544.45,548.1h1.4v1.4h-1.4zM614.4,548.1h1.4v1.4h-1.4zM649.38,548.1h1.4v1.4h-1.4zM684.35,548.1h1.4v1.4h-1.4zM719.32,548.1h1.4v1.4h-1.4zM789.27,548.1h1.4v1.4h-1.4zM824.25,548.1h1.4v1.4h-1.4zM859.23,548.1h1.4v1.4h-1.4zM894.2,548.1h1.4v1.4h-1.4zM964.15,548.1h1.4v1.4h-1.4zM999.12,548.1h1.4v1.4h-1.4zM1034.1,548.1h1.4v1.4h-1.4zM1069.08,548.1h1.4v1.4h-1.4zM1139.03,548.1h1.4v1.4h-1.4zM1174,548.1h1.4v1.4h-1.4zM1208.97,548.1h1.4v1.4h-1.4zM1243.95,548.1h1.4v1.4h-1.4zM1313.9,548.1h1.4v1.4h-1.4zM1348.88,548.1h1.4v1.4h-1.4zM1383.85,548.1h1.4v1.4h-1.4zM1418.83,548.1h1.4v1.4h-1.4zM1488.78,548.1h1.4v1.4h-1.4zM1523.75,548.1h1.4v1.4h-1.4zM1558.72,548.1h1.4v1.4h-1.4zM1593.7,548.1h1.4v1.4h-1.4zM1663.65,548.1h1.4v1.4h-1.4zM1698.62,548.1h1.4v1.4h-1.4zM1733.6,548.1h1.4v1.4h-1.4zM19.82,571.45h1.4v1.4h-1.4zM89.77,571.45h1.4v1.4h-1.4zM124.75,571.45h1.4v1.4h-1.4zM159.73,571.45h1.4v1.4h-1.4zM194.7,571.45h1.4v1.4h-1.4zM264.65,571.45h1.4v1.4h-1.4zM299.63,571.45h1.4v1.4h-1.4zM334.6,571.45h1.4v1.4h-1.4zM369.58,571.45h1.4v1.4h-1.4zM439.53,571.45h1.4v1.4h-1.4zM474.5,571.45h1.4v1.4h-1.4zM509.48,571.45h1.4v1.4h-1.4zM544.45,571.45h1.4v1.4h-1.4zM614.4,571.45h1.4v1.4h-1.4zM649.38,571.45h1.4v1.4h-1.4zM684.35,571.45h1.4v1.4h-1.4zM719.32,571.45h1.4v1.4h-1.4zM789.27,571.45h1.4v1.4h-1.4zM824.25,571.45h1.4v1.4h-1.4zM859.23,571.45h1.4v1.4h-1.4zM894.2,571.45h1.4v1.4h-1.4zM964.15,571.45h1.4v1.4h-1.4zM999.12,571.45h1.4v1.4h-1.4zM1034.1,571.45h1.4v1.4h-1.4zM1069.08,571.45h1.4v1.4h-1.4zM1139.03,571.45h1.4v1.4h-1.4zM1174,571.45h1.4v1.4h-1.4zM1208.97,571.45h1.4v1.4h-1.4zM1243.95,571.45h1.4v1.4h-1.4zM1313.9,571.45h1.4v1.4h-1.4zM1348.88,571.45h1.4v1.4h-1.4zM1383.85,571.45h1.4v1.4h-1.4zM1418.83,571.45h1.4v1.4h-1.4zM1488.78,571.45h1.4v1.4h-1.4zM1523.75,571.45h1.4v1.4h-1.4zM1558.72,571.45h1.4v1.4h-1.4zM1593.7,571.45h1.4v1.4h-1.4zM1663.65,571.45h1.4v1.4h-1.4zM1698.62,571.45h1.4v1.4h-1.4zM1733.6,571.45h1.4v1.4h-1.4zM19.82,594.8h1.4v1.4h-1.4zM89.77,594.8h1.4v1.4h-1.4zM124.75,594.8h1.4v1.4h-1.4zM159.73,594.8h1.4v1.4h-1.4zM194.7,594.8h1.4v1.4h-1.4zM264.65,594.8h1.4v1.4h-1.4zM299.63,594.8h1.4v1.4h-1.4zM334.6,594.8h1.4v1.4h-1.4zM369.58,594.8h1.4v1.4h-1.4zM439.53,594.8h1.4v1.4h-1.4zM474.5,594.8h1.4v1.4h-1.4zM509.48,594.8h1.4v1.4h-1.4zM544.45,594.8h1.4v1.4h-1.4zM614.4,594.8h1.4v1.4h-1.4zM649.38,594.8h1.4v1.4h-1.4zM684.35,594.8h1.4v1.4h-1.4zM719.32,594.8h1.4v1.4h-1.4zM789.27,594.8h1.4v1.4h-1.4zM824.25,594.8h1.4v1.4h-1.4zM859.23,594.8h1.4v1.4h-1.4zM894.2,594.8h1.4v1.4h-1.4zM964.15,594.8h1.4v1.4h-1.4zM999.12,594.8h1.4v1.4h-1.4zM1034.1,594.8h1.4v1.4h-1.4zM1069.08,594.8h1.4v1.4h-1.4zM1139.03,594.8h1.4v1.4h-1.4zM1174,594.8h1.4v1.4h-1.4zM1208.97,594.8h1.4v1.4h-1.4zM1243.95,594.8h1.4v1.4h-1.4zM1313.9,594.8h1.4v1.4h-1.4zM1348.88,594.8h1.4v1.4h-1.4zM1383.85,594.8h1.4v1.4h-1.4zM1418.83,594.8h1.4v1.4h-1.4zM1488.78,594.8h1.4v1.4h-1.4zM1523.75,594.8h1.4v1.4h-1.4zM1558.72,594.8h1.4v1.4h-1.4zM1593.7,594.8h1.4v1.4h-1.4zM1663.65,594.8h1.4v1.4h-1.4zM1698.62,594.8h1.4v1.4h-1.4zM1733.6,594.8h1.4v1.4h-1.4zM19.82,618.15h1.4v1.4h-1.4zM89.77,618.15h1.4v1.4h-1.4zM124.75,618.15h1.4v1.4h-1.4zM159.73,618.15h1.4v1.4h-1.4zM194.7,618.15h1.4v1.4h-1.4zM264.65,618.15h1.4v1.4h-1.4zM299.63,618.15h1.4v1.4h-1.4zM334.6,618.15h1.4v1.4h-1.4zM369.58,618.15h1.4v1.4h-1.4zM439.53,618.15h1.4v1.4h-1.4zM474.5,618.15h1.4v1.4h-1.4zM509.48,618.15h1.4v1.4h-1.4zM544.45,618.15h1.4v1.4h-1.4zM614.4,618.15h1.4v1.4h-1.4zM649.38,618.15h1.4v1.4h-1.4zM684.35,618.15h1.4v1.4h-1.4zM719.32,618.15h1.4v1.4h-1.4zM789.27,618.15h1.4v1.4h-1.4zM824.25,618.15h1.4v1.4h-1.4zM859.23,618.15h1.4v1.4h-1.4zM894.2,618.15h1.4v1.4h-1.4zM964.15,618.15h1.4v1.4h-1.4zM999.12,618.15h1.4v1.4h-1.4zM1034.1,618.15h1.4v1.4h-1.4zM1069.08,618.15h1.4v1.4h-1.4zM1139.03,618.15h1.4v1.4h-1.4zM1174,618.15h1.4v1.4h-1.4zM1208.97,618.15h1.4v1.4h-1.4zM1243.95,618.15h1.4v1.4h-1.4zM1313.9,618.15h1.4v1.4h-1.4zM1348.88,618.15h1.4v1.4h-1.4zM1383.85,618.15h1.4v1.4h-1.4zM1418.83,618.15h1.4v1.4h-1.4zM1488.78,618.15h1.4v1.4h-1.4zM1523.75,618.15h1.4v1.4h-1.4zM1558.72,618.15h1.4v1.4h-1.4zM1593.7,618.15h1.4v1.4h-1.4zM1663.65,618.15h1.4v1.4h-1.4zM1698.62,618.15h1.4v1.4h-1.4zM1733.6,618.15h1.4v1.4h-1.4zM19.82,641.5h1.4v1.4h-1.4zM89.77,641.5h1.4v1.4h-1.4zM124.75,641.5h1.4v1.4h-1.4zM159.73,641.5h1.4v1.4h-1.4zM194.7,641.5h1.4v1.4h-1.4zM264.65,641.5h1.4v1.4h-1.4zM299.63,641.5h1.4v1.4h-1.4zM334.6,641.5h1.4v1.4h-1.4zM369.58,641.5h1.4v1.4h-1.4zM439.53,641.5h1.4v1.4h-1.4zM474.5,641.5h1.4v1.4h-1.4zM509.48,641.5h1.4v1.4h-1.4zM544.45,641.5h1.4v1.4h-1.4zM614.4,641.5h1.4v1.4h-1.4zM649.38,641.5h1.4v1.4h-1.4zM684.35,641.5h1.4v1.4h-1.4zM719.32,641.5h1.4v1.4h-1.4zM789.27,641.5h1.4v1.4h-1.4zM824.25,641.5h1.4v1.4h-1.4zM859.23,641.5h1.4v1.4h-1.4zM894.2,641.5h1.4v1.4h-1.4zM964.15,641.5h1.4v1.4h-1.4zM999.12,641.5h1.4v1.4h-1.4zM1034.1,641.5h1.4v1.4h-1.4zM1069.08,641.5h1.4v1.4h-1.4zM1139.03,641.5h1.4v1.4h-1.4zM1174,641.5h1.4v1.4h-1.4zM1208.97,641.5h1.4v1.4h-1.4zM1243.95,641.5h1.4v1.4h-1.4zM1313.9,641.5h1.4v1.4h-1.4zM1348.88,641.5h1.4v1.4h-1.4zM1383.85,641.5h1.4v1.4h-1.4zM1418.83,641.5h1.4v1.4h-1.4zM1488.78,641.5h1.4v1.4h-1.4zM1523.75,641.5h1.4v1.4h-1.4zM1558.72,641.5h1.4v1.4h-1.4zM1593.7,641.5h1.4v1.4h-1.4zM1663.65,641.5h1.4v1.4h-1.4zM1698.62,641.5h1.4v1.4h-1.4zM1733.6,641.5h1.4v1.4h-1.4zM19.82,664.85h1.4v1.4h-1.4zM89.77,664.85h1.4v1.4h-1.4zM124.75,664.85h1.4v1.4h-1.4zM159.73,664.85h1.4v1.4h-1.4zM194.7,664.85h1.4v1.4h-1.4zM264.65,664.85h1.4v1.4h-1.4zM299.63,664.85h1.4v1.4h-1.4zM334.6,664.85h1.4v1.4h-1.4zM369.58,664.85h1.4v1.4h-1.4zM439.53,664.85h1.4v1.4h-1.4zM474.5,664.85h1.4v1.4h-1.4zM509.48,664.85h1.4v1.4h-1.4zM544.45,664.85h1.4v1.4h-1.4zM614.4,664.85h1.4v1.4h-1.4zM649.38,664.85h1.4v1.4h-1.4zM684.35,664.85h1.4v1.4h-1.4zM719.32,664.85h1.4v1.4h-1.4zM789.27,664.85h1.4v1.4h-1.4zM824.25,664.85h1.4v1.4h-1.4zM859.23,664.85h1.4v1.4h-1.4zM894.2,664.85h1.4v1.4h-1.4zM964.15,664.85h1.4v1.4h-1.4zM999.12,664.85h1.4v1.4h-1.4zM1034.1,664.85h1.4v1.4h-1.4zM1069.08,664.85h1.4v1.4h-1.4zM1139.03,664.85h1.4v1.4h-1.4zM1174,664.85h1.4v1.4h-1.4zM1208.97,664.85h1.4v1.4h-1.4zM1243.95,664.85h1.4v1.4h-1.4zM1313.9,664.85h1.4v1.4h-1.4zM1348.88,664.85h1.4v1.4h-1.4zM1383.85,664.85h1.4v1.4h-1.4zM1418.83,664.85h1.4v1.4h-1.4zM1488.78,664.85h1.4v1.4h-1.4zM1523.75,664.85h1.4v1.4h-1.4zM1558.72,664.85h1.4v1.4h-1.4zM1593.7,664.85h1.4v1.4h-1.4zM1663.65,664.85h1.4v1.4h-1.4zM1698.62,664.85h1.4v1.4h-1.4zM1733.6,664.85h1.4v1.4h-1.4zM19.82,688.2h1.4v1.4h-1.4zM89.77,688.2h1.4v1.4h-1.4zM124.75,688.2h1.4v1.4h-1.4zM159.73,688.2h1.4v1.4h-1.4zM194.7,688.2h1.4v1.4h-1.4zM264.65,688.2h1.4v1.4h-1.4zM299.63,688.2h1.4v1.4h-1.4zM334.6,688.2h1.4v1.4h-1.4zM369.58,688.2h1.4v1.4h-1.4zM439.53,688.2h1.4v1.4h-1.4zM474.5,688.2h1.4v1.4h-1.4zM509.48,688.2h1.4v1.4h-1.4zM544.45,688.2h1.4v1.4h-1.4zM614.4,688.2h1.4v1.4h-1.4zM649.38,688.2h1.4v1.4h-1.4zM684.35,688.2h1.4v1.4h-1.4zM719.32,688.2h1.4v1.4h-1.4zM789.27,688.2h1.4v1.4h-1.4zM824.25,688.2h1.4v1.4h-1.4zM859.23,688.2h1.4v1.4h-1.4zM894.2,688.2h1.4v1.4h-1.4zM964.15,688.2h1.4v1.4h-1.4zM999.12,688.2h1.4v1.4h-1.4zM1034.1,688.2h1.4v1.4h-1.4zM1069.08,688.2h1.4v1.4h-1.4zM1139.03,688.2h1.4v1.4h-1.4zM1174,688.2h1.4v1.4h-1.4zM1208.97,688.2h1.4v1.4h-1.4zM1243.95,688.2h1.4v1.4h-1.4zM1313.9,688.2h1.4v1.4h-1.4zM1348.88,688.2h1.4v1.4h-1.4zM1383.85,688.2h1.4v1.4h-1.4zM1418.83,688.2h1.4v1.4h-1.4zM1488.78,688.2h1.4v1.4h-1.4zM1523.75,688.2h1.4v1.4h-1.4zM1558.72,688.2h1.4v1.4h-1.4zM1593.7,688.2h1.4v1.4h-1.4zM1663.65,688.2h1.4v1.4h-1.4zM1698.62,688.2h1.4v1.4h-1.4zM1733.6,688.2h1.4v1.4h-1.4zM19.82,711.55h1.4v1.4h-1.4zM89.77,711.55h1.4v1.4h-1.4zM124.75,711.55h1.4v1.4h-1.4zM159.73,711.55h1.4v1.4h-1.4zM194.7,711.55h1.4v1.4h-1.4zM264.65,711.55h1.4v1.4h-1.4zM299.63,711.55h1.4v1.4h-1.4zM334.6,711.55h1.4v1.4h-1.4zM369.58,711.55h1.4v1.4h-1.4zM439.53,711.55h1.4v1.4h-1.4zM474.5,711.55h1.4v1.4h-1.4zM509.48,711.55h1.4v1.4h-1.4zM544.45,711.55h1.4v1.4h-1.4zM614.4,711.55h1.4v1.4h-1.4zM649.38,711.55h1.4v1.4h-1.4zM684.35,711.55h1.4v1.4h-1.4zM719.32,711.55h1.4v1.4h-1.4zM789.27,711.55h1.4v1.4h-1.4zM824.25,711.55h1.4v1.4h-1.4zM859.23,711.55h1.4v1.4h-1.4zM894.2,711.55h1.4v1.4h-1.4zM964.15,711.55h1.4v1.4h-1.4zM999.12,711.55h1.4v1.4h-1.4zM1034.1,711.55h1.4v1.4h-1.4zM1069.08,711.55h1.4v1.4h-1.4zM1139.03,711.55h1.4v1.4h-1.4zM1174,711.55h1.4v1.4h-1.4zM1208.97,711.55h1.4v1.4h-1.4zM1243.95,711.55h1.4v1.4h-1.4zM1313.9,711.55h1.4v1.4h-1.4zM1348.88,711.55h1.4v1.4h-1.4zM1383.85,711.55h1.4v1.4h-1.4zM1418.83,711.55h1.4v1.4h-1.4zM1488.78,711.55h1.4v1.4h-1.4zM1523.75,711.55h1.4v1.4h-1.4zM1558.72,711.55h1.4v1.4h-1.4zM1593.7,711.55h1.4v1.4h-1.4zM1663.65,711.55h1.4v1.4h-1.4zM1698.62,711.55h1.4v1.4h-1.4zM1733.6,711.55h1.4v1.4h-1.4zM19.82,734.9h1.4v1.4h-1.4zM89.77,734.9h1.4v1.4h-1.4zM124.75,734.9h1.4v1.4h-1.4zM159.73,734.9h1.4v1.4h-1.4zM194.7,734.9h1.4v1.4h-1.4zM264.65,734.9h1.4v1.4h-1.4zM299.63,734.9h1.4v1.4h-1.4zM334.6,734.9h1.4v1.4h-1.4zM369.58,734.9h1.4v1.4h-1.4zM439.53,734.9h1.4v1.4h-1.4zM474.5,734.9h1.4v1.4h-1.4zM509.48,734.9h1.4v1.4h-1.4zM544.45,734.9h1.4v1.4h-1.4zM614.4,734.9h1.4v1.4h-1.4zM649.38,734.9h1.4v1.4h-1.4zM684.35,734.9h1.4v1.4h-1.4zM719.32,734.9h1.4v1.4h-1.4zM789.27,734.9h1.4v1.4h-1.4zM824.25,734.9h1.4v1.4h-1.4zM859.23,734.9h1.4v1.4h-1.4zM894.2,734.9h1.4v1.4h-1.4zM964.15,734.9h1.4v1.4h-1.4zM999.12,734.9h1.4v1.4h-1.4zM1034.1,734.9h1.4v1.4h-1.4zM1069.08,734.9h1.4v1.4h-1.4zM1139.03,734.9h1.4v1.4h-1.4zM1174,734.9h1.4v1.4h-1.4zM1208.97,734.9h1.4v1.4h-1.4zM1243.95,734.9h1.4v1.4h-1.4zM1313.9,734.9h1.4v1.4h-1.4zM1348.88,734.9h1.4v1.4h-1.4zM1383.85,734.9h1.4v1.4h-1.4zM1418.83,734.9h1.4v1.4h-1.4zM1488.78,734.9h1.4v1.4h-1.4zM1523.75,734.9h1.4v1.4h-1.4zM1558.72,734.9h1.4v1.4h-1.4zM1593.7,734.9h1.4v1.4h-1.4zM1663.65,734.9h1.4v1.4h-1.4zM1698.62,734.9h1.4v1.4h-1.4zM1733.6,734.9h1.4v1.4h-1.4zM19.82,758.25h1.4v1.4h-1.4zM89.77,758.25h1.4v1.4h-1.4zM124.75,758.25h1.4v1.4h-1.4zM159.73,758.25h1.4v1.4h-1.4zM194.7,758.25h1.4v1.4h-1.4zM264.65,758.25h1.4v1.4h-1.4zM299.63,758.25h1.4v1.4h-1.4zM334.6,758.25h1.4v1.4h-1.4zM369.58,758.25h1.4v1.4h-1.4zM439.53,758.25h1.4v1.4h-1.4zM474.5,758.25h1.4v1.4h-1.4zM509.48,758.25h1.4v1.4h-1.4zM544.45,758.25h1.4v1.4h-1.4zM614.4,758.25h1.4v1.4h-1.4zM649.38,758.25h1.4v1.4h-1.4zM684.35,758.25h1.4v1.4h-1.4zM719.32,758.25h1.4v1.4h-1.4zM789.27,758.25h1.4v1.4h-1.4zM824.25,758.25h1.4v1.4h-1.4zM859.23,758.25h1.4v1.4h-1.4zM894.2,758.25h1.4v1.4h-1.4zM964.15,758.25h1.4v1.4h-1.4zM999.12,758.25h1.4v1.4h-1.4zM1034.1,758.25h1.4v1.4h-1.4zM1069.08,758.25h1.4v1.4h-1.4zM1139.03,758.25h1.4v1.4h-1.4zM1174,758.25h1.4v1.4h-1.4zM1208.97,758.25h1.4v1.4h-1.4zM1243.95,758.25h1.4v1.4h-1.4zM1313.9,758.25h1.4v1.4h-1.4zM1348.88,758.25h1.4v1.4h-1.4zM1383.85,758.25h1.4v1.4h-1.4zM1418.83,758.25h1.4v1.4h-1.4zM1488.78,758.25h1.4v1.4h-1.4zM1523.75,758.25h1.4v1.4h-1.4zM1558.72,758.25h1.4v1.4h-1.4zM1593.7,758.25h1.4v1.4h-1.4zM1663.65,758.25h1.4v1.4h-1.4zM1698.62,758.25h1.4v1.4h-1.4zM1733.6,758.25h1.4v1.4h-1.4zM19.82,776.25h1.4v1.4h-1.4zM89.77,776.25h1.4v1.4h-1.4zM124.75,776.25h1.4v1.4h-1.4zM159.73,776.25h1.4v1.4h-1.4zM194.7,776.25h1.4v1.4h-1.4zM264.65,776.25h1.4v1.4h-1.4zM299.63,776.25h1.4v1.4h-1.4zM334.6,776.25h1.4v1.4h-1.4zM369.58,776.25h1.4v1.4h-1.4zM439.53,776.25h1.4v1.4h-1.4zM474.5,776.25h1.4v1.4h-1.4zM509.48,776.25h1.4v1.4h-1.4zM544.45,776.25h1.4v1.4h-1.4zM614.4,776.25h1.4v1.4h-1.4zM649.38,776.25h1.4v1.4h-1.4zM684.35,776.25h1.4v1.4h-1.4zM719.32,776.25h1.4v1.4h-1.4zM789.27,776.25h1.4v1.4h-1.4zM824.25,776.25h1.4v1.4h-1.4zM859.23,776.25h1.4v1.4h-1.4zM894.2,776.25h1.4v1.4h-1.4zM964.15,776.25h1.4v1.4h-1.4zM999.12,776.25h1.4v1.4h-1.4zM1034.1,776.25h1.4v1.4h-1.4zM1069.08,776.25h1.4v1.4h-1.4zM1139.03,776.25h1.4v1.4h-1.4zM1174,776.25h1.4v1.4h-1.4zM1208.97,776.25h1.4v1.4h-1.4zM1243.95,776.25h1.4v1.4h-1.4zM1313.9,776.25h1.4v1.4h-1.4zM1348.88,776.25h1.4v1.4h-1.4zM1383.85,776.25h1.4v1.4h-1.4zM1418.83,776.25h1.4v1.4h-1.4zM1488.78,776.25h1.4v1.4h-1.4zM1523.75,776.25h1.4v1.4h-1.4zM1558.72,776.25h1.4v1.4h-1.4zM1593.7,776.25h1.4v1.4h-1.4zM1663.65,776.25h1.4v1.4h-1.4zM1698.62,776.25h1.4v1.4h-1.4zM1733.6,776.25h1.4v1.4h-1.4zM19.82,799.6h1.4v1.4h-1.4zM89.77,799.6h1.4v1.4h-1.4zM124.75,799.6h1.4v1.4h-1.4zM159.73,799.6h1.4v1.4h-1.4zM194.7,799.6h1.4v1.4h-1.4zM264.65,799.6h1.4v1.4h-1.4zM299.63,799.6h1.4v1.4h-1.4zM334.6,799.6h1.4v1.4h-1.4zM369.58,799.6h1.4v1.4h-1.4zM439.53,799.6h1.4v1.4h-1.4zM474.5,799.6h1.4v1.4h-1.4zM509.48,799.6h1.4v1.4h-1.4zM544.45,799.6h1.4v1.4h-1.4zM614.4,799.6h1.4v1.4h-1.4zM649.38,799.6h1.4v1.4h-1.4zM684.35,799.6h1.4v1.4h-1.4zM719.32,799.6h1.4v1.4h-1.4zM789.27,799.6h1.4v1.4h-1.4zM824.25,799.6h1.4v1.4h-1.4zM859.23,799.6h1.4v1.4h-1.4zM894.2,799.6h1.4v1.4h-1.4zM964.15,799.6h1.4v1.4h-1.4zM999.12,799.6h1.4v1.4h-1.4zM1034.1,799.6h1.4v1.4h-1.4zM1069.08,799.6h1.4v1.4h-1.4zM1139.03,799.6h1.4v1.4h-1.4zM1174,799.6h1.4v1.4h-1.4zM1208.97,799.6h1.4v1.4h-1.4zM1243.95,799.6h1.4v1.4h-1.4zM1313.9,799.6h1.4v1.4h-1.4zM1348.88,799.6h1.4v1.4h-1.4zM1383.85,799.6h1.4v1.4h-1.4zM1418.83,799.6h1.4v1.4h-1.4zM1488.78,799.6h1.4v1.4h-1.4zM1523.75,799.6h1.4v1.4h-1.4zM1558.72,799.6h1.4v1.4h-1.4zM1593.7,799.6h1.4v1.4h-1.4zM1663.65,799.6h1.4v1.4h-1.4zM1698.62,799.6h1.4v1.4h-1.4zM1733.6,799.6h1.4v1.4h-1.4zM19.82,822.95h1.4v1.4h-1.4zM89.77,822.95h1.4v1.4h-1.4zM124.75,822.95h1.4v1.4h-1.4zM159.73,822.95h1.4v1.4h-1.4zM194.7,822.95h1.4v1.4h-1.4zM264.65,822.95h1.4v1.4h-1.4zM299.63,822.95h1.4v1.4h-1.4zM334.6,822.95h1.4v1.4h-1.4zM369.58,822.95h1.4v1.4h-1.4zM439.53,822.95h1.4v1.4h-1.4zM474.5,822.95h1.4v1.4h-1.4zM509.48,822.95h1.4v1.4h-1.4zM544.45,822.95h1.4v1.4h-1.4zM614.4,822.95h1.4v1.4h-1.4zM649.38,822.95h1.4v1.4h-1.4zM684.35,822.95h1.4v1.4h-1.4zM719.32,822.95h1.4v1.4h-1.4zM789.27,822.95h1.4v1.4h-1.4zM824.25,822.95h1.4v1.4h-1.4zM859.23,822.95h1.4v1.4h-1.4zM894.2,822.95h1.4v1.4h-1.4zM964.15,822.95h1.4v1.4h-1.4zM999.12,822.95h1.4v1.4h-1.4zM1034.1,822.95h1.4v1.4h-1.4zM1069.08,822.95h1.4v1.4h-1.4zM1139.03,822.95h1.4v1.4h-1.4zM1174,822.95h1.4v1.4h-1.4zM1208.97,822.95h1.4v1.4h-1.4zM1243.95,822.95h1.4v1.4h-1.4zM1313.9,822.95h1.4v1.4h-1.4zM1348.88,822.95h1.4v1.4h-1.4zM1383.85,822.95h1.4v1.4h-1.4zM1418.83,822.95h1.4v1.4h-1.4zM1488.78,822.95h1.4v1.4h-1.4zM1523.75,822.95h1.4v1.4h-1.4zM1558.72,822.95h1.4v1.4h-1.4zM1593.7,822.95h1.4v1.4h-1.4zM1663.65,822.95h1.4v1.4h-1.4zM1698.62,822.95h1.4v1.4h-1.4zM1733.6,822.95h1.4v1.4h-1.4zM19.82,846.3h1.4v1.4h-1.4zM89.77,846.3h1.4v1.4h-1.4zM124.75,846.3h1.4v1.4h-1.4zM159.73,846.3h1.4v1.4h-1.4zM194.7,846.3h1.4v1.4h-1.4zM264.65,846.3h1.4v1.4h-1.4zM299.63,846.3h1.4v1.4h-1.4zM334.6,846.3h1.4v1.4h-1.4zM369.58,846.3h1.4v1.4h-1.4zM439.53,846.3h1.4v1.4h-1.4zM474.5,846.3h1.4v1.4h-1.4zM509.48,846.3h1.4v1.4h-1.4zM544.45,846.3h1.4v1.4h-1.4zM614.4,846.3h1.4v1.4h-1.4zM649.38,846.3h1.4v1.4h-1.4zM684.35,846.3h1.4v1.4h-1.4zM719.32,846.3h1.4v1.4h-1.4zM789.27,846.3h1.4v1.4h-1.4zM824.25,846.3h1.4v1.4h-1.4zM859.23,846.3h1.4v1.4h-1.4zM894.2,846.3h1.4v1.4h-1.4zM964.15,846.3h1.4v1.4h-1.4zM999.12,846.3h1.4v1.4h-1.4zM1034.1,846.3h1.4v1.4h-1.4zM1069.08,846.3h1.4v1.4h-1.4zM1139.03,846.3h1.4v1.4h-1.4zM1174,846.3h1.4v1.4h-1.4zM1208.97,846.3h1.4v1.4h-1.4zM1243.95,846.3h1.4v1.4h-1.4zM1313.9,846.3h1.4v1.4h-1.4zM1348.88,846.3h1.4v1.4h-1.4zM1383.85,846.3h1.4v1.4h-1.4zM1418.83,846.3h1.4v1.4h-1.4zM1488.78,846.3h1.4v1.4h-1.4zM1523.75,846.3h1.4v1.4h-1.4zM1558.72,846.3h1.4v1.4h-1.4zM1593.7,846.3h1.4v1.4h-1.4zM1663.65,846.3h1.4v1.4h-1.4zM1698.62,846.3h1.4v1.4h-1.4zM1733.6,846.3h1.4v1.4h-1.4zM19.82,869.65h1.4v1.4h-1.4zM89.77,869.65h1.4v1.4h-1.4zM124.75,869.65h1.4v1.4h-1.4zM159.73,869.65h1.4v1.4h-1.4zM194.7,869.65h1.4v1.4h-1.4zM264.65,869.65h1.4v1.4h-1.4zM299.63,869.65h1.4v1.4h-1.4zM334.6,869.65h1.4v1.4h-1.4zM369.58,869.65h1.4v1.4h-1.4zM439.53,869.65h1.4v1.4h-1.4zM474.5,869.65h1.4v1.4h-1.4zM509.48,869.65h1.4v1.4h-1.4zM544.45,869.65h1.4v1.4h-1.4zM614.4,869.65h1.4v1.4h-1.4zM649.38,869.65h1.4v1.4h-1.4zM684.35,869.65h1.4v1.4h-1.4zM719.32,869.65h1.4v1.4h-1.4zM789.27,869.65h1.4v1.4h-1.4zM824.25,869.65h1.4v1.4h-1.4zM859.23,869.65h1.4v1.4h-1.4zM894.2,869.65h1.4v1.4h-1.4zM964.15,869.65h1.4v1.4h-1.4zM999.12,869.65h1.4v1.4h-1.4zM1034.1,869.65h1.4v1.4h-1.4zM1069.08,869.65h1.4v1.4h-1.4zM1139.03,869.65h1.4v1.4h-1.4zM1174,869.65h1.4v1.4h-1.4zM1208.97,869.65h1.4v1.4h-1.4zM1243.95,869.65h1.4v1.4h-1.4zM1313.9,869.65h1.4v1.4h-1.4zM1348.88,869.65h1.4v1.4h-1.4zM1383.85,869.65h1.4v1.4h-1.4zM1418.83,869.65h1.4v1.4h-1.4zM1488.78,869.65h1.4v1.4h-1.4zM1523.75,869.65h1.4v1.4h-1.4zM1558.72,869.65h1.4v1.4h-1.4zM1593.7,869.65h1.4v1.4h-1.4zM1663.65,869.65h1.4v1.4h-1.4zM1698.62,869.65h1.4v1.4h-1.4zM1733.6,869.65h1.4v1.4h-1.4zM19.82,893h1.4v1.4h-1.4zM89.77,893h1.4v1.4h-1.4zM124.75,893h1.4v1.4h-1.4zM159.73,893h1.4v1.4h-1.4zM194.7,893h1.4v1.4h-1.4zM264.65,893h1.4v1.4h-1.4zM299.63,893h1.4v1.4h-1.4zM334.6,893h1.4v1.4h-1.4zM369.58,893h1.4v1.4h-1.4zM439.53,893h1.4v1.4h-1.4zM474.5,893h1.4v1.4h-1.4zM509.48,893h1.4v1.4h-1.4zM544.45,893h1.4v1.4h-1.4zM614.4,893h1.4v1.4h-1.4zM649.38,893h1.4v1.4h-1.4zM684.35,893h1.4v1.4h-1.4zM719.32,893h1.4v1.4h-1.4zM789.27,893h1.4v1.4h-1.4zM824.25,893h1.4v1.4h-1.4zM859.23,893h1.4v1.4h-1.4zM894.2,893h1.4v1.4h-1.4zM964.15,893h1.4v1.4h-1.4zM999.12,893h1.4v1.4h-1.4zM1034.1,893h1.4v1.4h-1.4zM1069.08,893h1.4v1.4h-1.4zM1139.03,893h1.4v1.4h-1.4zM1174,893h1.4v1.4h-1.4zM1208.97,893h1.4v1.4h-1.4zM1243.95,893h1.4v1.4h-1.4zM1313.9,893h1.4v1.4h-1.4zM1348.88,893h1.4v1.4h-1.4zM1383.85,893h1.4v1.4h-1.4zM1418.83,893h1.4v1.4h-1.4zM1488.78,893h1.4v1.4h-1.4zM1523.75,893h1.4v1.4h-1.4zM1558.72,893h1.4v1.4h-1.4zM1593.7,893h1.4v1.4h-1.4zM1663.65,893h1.4v1.4h-1.4zM1698.62,893h1.4v1.4h-1.4zM1733.6,893h1.4v1.4h-1.4zM19.82,916.35h1.4v1.4h-1.4zM89.77,916.35h1.4v1.4h-1.4zM124.75,916.35h1.4v1.4h-1.4zM159.73,916.35h1.4v1.4h-1.4zM194.7,916.35h1.4v1.4h-1.4zM264.65,916.35h1.4v1.4h-1.4zM299.63,916.35h1.4v1.4h-1.4zM334.6,916.35h1.4v1.4h-1.4zM369.58,916.35h1.4v1.4h-1.4zM439.53,916.35h1.4v1.4h-1.4zM474.5,916.35h1.4v1.4h-1.4zM509.48,916.35h1.4v1.4h-1.4zM544.45,916.35h1.4v1.4h-1.4zM614.4,916.35h1.4v1.4h-1.4zM649.38,916.35h1.4v1.4h-1.4zM684.35,916.35h1.4v1.4h-1.4zM719.32,916.35h1.4v1.4h-1.4zM789.27,916.35h1.4v1.4h-1.4zM824.25,916.35h1.4v1.4h-1.4zM859.23,916.35h1.4v1.4h-1.4zM894.2,916.35h1.4v1.4h-1.4zM964.15,916.35h1.4v1.4h-1.4zM999.12,916.35h1.4v1.4h-1.4zM1034.1,916.35h1.4v1.4h-1.4zM1069.08,916.35h1.4v1.4h-1.4zM1139.03,916.35h1.4v1.4h-1.4zM1174,916.35h1.4v1.4h-1.4zM1208.97,916.35h1.4v1.4h-1.4zM1243.95,916.35h1.4v1.4h-1.4zM1313.9,916.35h1.4v1.4h-1.4zM1348.88,916.35h1.4v1.4h-1.4zM1383.85,916.35h1.4v1.4h-1.4zM1418.83,916.35h1.4v1.4h-1.4zM1488.78,916.35h1.4v1.4h-1.4zM1523.75,916.35h1.4v1.4h-1.4zM1558.72,916.35h1.4v1.4h-1.4zM1593.7,916.35h1.4v1.4h-1.4zM1663.65,916.35h1.4v1.4h-1.4zM1698.62,916.35h1.4v1.4h-1.4zM1733.6,916.35h1.4v1.4h-1.4zM19.82,939.7h1.4v1.4h-1.4zM89.77,939.7h1.4v1.4h-1.4zM124.75,939.7h1.4v1.4h-1.4zM159.73,939.7h1.4v1.4h-1.4zM194.7,939.7h1.4v1.4h-1.4zM264.65,939.7h1.4v1.4h-1.4zM299.63,939.7h1.4v1.4h-1.4zM334.6,939.7h1.4v1.4h-1.4zM369.58,939.7h1.4v1.4h-1.4zM439.53,939.7h1.4v1.4h-1.4zM474.5,939.7h1.4v1.4h-1.4zM509.48,939.7h1.4v1.4h-1.4zM544.45,939.7h1.4v1.4h-1.4zM614.4,939.7h1.4v1.4h-1.4zM649.38,939.7h1.4v1.4h-1.4zM684.35,939.7h1.4v1.4h-1.4zM719.32,939.7h1.4v1.4h-1.4zM789.27,939.7h1.4v1.4h-1.4zM824.25,939.7h1.4v1.4h-1.4zM859.23,939.7h1.4v1.4h-1.4zM894.2,939.7h1.4v1.4h-1.4zM964.15,939.7h1.4v1.4h-1.4zM999.12,939.7h1.4v1.4h-1.4zM1034.1,939.7h1.4v1.4h-1.4zM1069.08,939.7h1.4v1.4h-1.4zM1139.03,939.7h1.4v1.4h-1.4zM1174,939.7h1.4v1.4h-1.4zM1208.97,939.7h1.4v1.4h-1.4zM1243.95,939.7h1.4v1.4h-1.4zM1313.9,939.7h1.4v1.4h-1.4zM1348.88,939.7h1.4v1.4h-1.4zM1383.85,939.7h1.4v1.4h-1.4zM1418.83,939.7h1.4v1.4h-1.4zM1488.78,939.7h1.4v1.4h-1.4zM1523.75,939.7h1.4v1.4h-1.4zM1558.72,939.7h1.4v1.4h-1.4zM1593.7,939.7h1.4v1.4h-1.4zM1663.65,939.7h1.4v1.4h-1.4zM1698.62,939.7h1.4v1.4h-1.4zM1733.6,939.7h1.4v1.4h-1.4zM19.82,963.05h1.4v1.4h-1.4zM89.77,963.05h1.4v1.4h-1.4zM124.75,963.05h1.4v1.4h-1.4zM159.73,963.05h1.4v1.4h-1.4zM194.7,963.05h1.4v1.4h-1.4zM264.65,963.05h1.4v1.4h-1.4zM299.63,963.05h1.4v1.4h-1.4zM334.6,963.05h1.4v1.4h-1.4zM369.58,963.05h1.4v1.4h-1.4zM439.53,963.05h1.4v1.4h-1.4zM474.5,963.05h1.4v1.4h-1.4zM509.48,963.05h1.4v1.4h-1.4zM544.45,963.05h1.4v1.4h-1.4zM614.4,963.05h1.4v1.4h-1.4zM649.38,963.05h1.4v1.4h-1.4zM684.35,963.05h1.4v1.4h-1.4zM719.32,963.05h1.4v1.4h-1.4zM789.27,963.05h1.4v1.4h-1.4zM824.25,963.05h1.4v1.4h-1.4zM859.23,963.05h1.4v1.4h-1.4zM894.2,963.05h1.4v1.4h-1.4zM964.15,963.05h1.4v1.4h-1.4zM999.12,963.05h1.4v1.4h-1.4zM1034.1,963.05h1.4v1.4h-1.4zM1069.08,963.05h1.4v1.4h-1.4zM1139.03,963.05h1.4v1.4h-1.4zM1174,963.05h1.4v1.4h-1.4zM1208.97,963.05h1.4v1.4h-1.4zM1243.95,963.05h1.4v1.4h-1.4zM1313.9,963.05h1.4v1.4h-1.4zM1348.88,963.05h1.4v1.4h-1.4zM1383.85,963.05h1.4v1.4h-1.4zM1418.83,963.05h1.4v1.4h-1.4zM1488.78,963.05h1.4v1.4h-1.4zM1523.75,963.05h1.4v1.4h-1.4zM1558.72,963.05h1.4v1.4h-1.4zM1593.7,963.05h1.4v1.4h-1.4zM1663.65,963.05h1.4v1.4h-1.4zM1698.62,963.05h1.4v1.4h-1.4zM1733.6,963.05h1.4v1.4h-1.4zM19.82,986.4h1.4v1.4h-1.4zM89.77,986.4h1.4v1.4h-1.4zM124.75,986.4h1.4v1.4h-1.4zM159.73,986.4h1.4v1.4h-1.4zM194.7,986.4h1.4v1.4h-1.4zM264.65,986.4h1.4v1.4h-1.4zM299.63,986.4h1.4v1.4h-1.4zM334.6,986.4h1.4v1.4h-1.4zM369.58,986.4h1.4v1.4h-1.4zM439.53,986.4h1.4v1.4h-1.4zM474.5,986.4h1.4v1.4h-1.4zM509.48,986.4h1.4v1.4h-1.4zM544.45,986.4h1.4v1.4h-1.4zM614.4,986.4h1.4v1.4h-1.4zM649.38,986.4h1.4v1.4h-1.4zM684.35,986.4h1.4v1.4h-1.4zM719.32,986.4h1.4v1.4h-1.4zM789.27,986.4h1.4v1.4h-1.4zM824.25,986.4h1.4v1.4h-1.4zM859.23,986.4h1.4v1.4h-1.4zM894.2,986.4h1.4v1.4h-1.4zM964.15,986.4h1.4v1.4h-1.4zM999.12,986.4h1.4v1.4h-1.4zM1034.1,986.4h1.4v1.4h-1.4zM1069.08,986.4h1.4v1.4h-1.4zM1139.03,986.4h1.4v1.4h-1.4zM1174,986.4h1.4v1.4h-1.4zM1208.97,986.4h1.4v1.4h-1.4zM1243.95,986.4h1.4v1.4h-1.4zM1313.9,986.4h1.4v1.4h-1.4zM1348.88,986.4h1.4v1.4h-1.4zM1383.85,986.4h1.4v1.4h-1.4zM1418.83,986.4h1.4v1.4h-1.4zM1488.78,986.4h1.4v1.4h-1.4zM1523.75,986.4h1.4v1.4h-1.4zM1558.72,986.4h1.4v1.4h-1.4zM1593.7,986.4h1.4v1.4h-1.4zM1663.65,986.4h1.4v1.4h-1.4zM1698.62,986.4h1.4v1.4h-1.4zM1733.6,986.4h1.4v1.4h-1.4z" fill="#b8b8b8"/><line x1="230.38" y1="58" x2="230.38" y2="993" stroke="#b8b8b8" stroke-width="1.3" stroke-dasharray="1.3 3.7"/><line x1="405.25" y1="58" x2="405.25" y2="993" stroke="#b8b8b8" stroke-width="1.3" stroke-dasharray="1.3 3.7"/><line x1="580.12" y1="58" x2="580.12" y2="993" stroke="#b8b8b8" stroke-width="1.3" stroke-dasharray="1.3 3.7"/><line x1="755" y1="58" x2="755" y2="993" stroke="#b8b8b8" stroke-width="1.3" stroke-dasharray="1.3 3.7"/><line x1="929.88" y1="58" x2="929.88" y2="993" stroke="#b8b8b8" stroke-width="1.3" stroke-dasharray="1.3 3.7"/><line x1="1104.75" y1="58" x2="1104.75" y2="993" stroke="#b8b8b8" stroke-width="1.3" stroke-dasharray="1.3 3.7"/><line x1="1279.62" y1="58" x2="1279.62" y2="993" stroke="#b8b8b8" stroke-width="1.3" stroke-dasharray="1.3 3.7"/><line x1="1454.5" y1="58" x2="1454.5" y2="993" stroke="#b8b8b8" stroke-width="1.3" stroke-dasharray="1.3 3.7"/><line x1="1629.38" y1="58" x2="1629.38" y2="993" stroke="#b8b8b8" stroke-width="1.3" stroke-dasharray="1.3 3.7"/><line x1="55.5" y1="96" x2="55.5" y2="993" stroke="#c8c8c8" stroke-width="1.4" stroke-dasharray="6 4"/><line x1="3" y1="267.6" x2="1751" y2="267.6" stroke="#bdbdbd" stroke-width="1.2" stroke-dasharray="5 5"/><line x1="3" y1="431.3" x2="1751" y2="431.3" stroke="#bdbdbd" stroke-width="1.2" stroke-dasharray="5 5"/><line x1="3" y1="735.5" x2="1751" y2="735.5" stroke="#bdbdbd" stroke-width="1.2" stroke-dasharray="5 5"/><line x1="3" y1="800.3" x2="1751" y2="800.3" stroke="#bdbdbd" stroke-width="1.2" stroke-dasharray="5 5"/><rect x="3" y="290" width="1748" height="2" fill="#7a7a7a"/><rect x="3" y="524" width="1748" height="2" fill="#7a7a7a"/><rect x="3" y="758" width="1748" height="2" fill="#7a7a7a"/><rect x="1709.23" y="73.95" width="36.77" height="13" fill="#000"/><text x="1746" y="86.05" text-anchor="end" font-size="13.5" fill="#ece43a">40 V</text><rect x="1709.23" y="97.3" width="36.77" height="13" fill="#000"/><text x="1746" y="109.4" text-anchor="end" font-size="13.5" fill="#ece43a">35 V</text><rect x="1709.23" y="120.65" width="36.77" height="13" fill="#000"/><text x="1746" y="132.75" text-anchor="end" font-size="13.5" fill="#ece43a">30 V</text><rect x="1709.23" y="144" width="36.77" height="13" fill="#000"/><text x="1746" y="156.1" text-anchor="end" font-size="13.5" fill="#ece43a">25 V</text><rect x="1709.23" y="167.35" width="36.77" height="13" fill="#000"/><text x="1746" y="179.45" text-anchor="end" font-size="13.5" fill="#ece43a">20 V</text><rect x="1709.23" y="190.7" width="36.77" height="13" fill="#000"/><text x="1746" y="202.8" text-anchor="end" font-size="13.5" fill="#ece43a">15 V</text><rect x="1709.23" y="214.05" width="36.77" height="13" fill="#000"/><text x="1746" y="226.15" text-anchor="end" font-size="13.5" fill="#ece43a">10 V</text><rect x="1716.74" y="237.4" width="29.26" height="13" fill="#000"/><text x="1746" y="249.5" text-anchor="end" font-size="13.5" fill="#ece43a">5 V</text><rect x="1716.74" y="260.75" width="29.26" height="13" fill="#000"/><text x="1746" y="272.85" text-anchor="end" font-size="13.5" fill="#ece43a">0 V</text><rect x="1716.74" y="307.25" width="29.26" height="13" fill="#000"/><text x="1746" y="319.35" text-anchor="end" font-size="13.5" fill="#8cc63f">1 V</text><rect x="1690.48" y="330.6" width="55.52" height="13" fill="#000"/><text x="1746" y="342.7" text-anchor="end" font-size="13.5" fill="#8cc63f">800 mV</text><rect x="1690.48" y="353.95" width="55.52" height="13" fill="#000"/><text x="1746" y="366.05" text-anchor="end" font-size="13.5" fill="#8cc63f">600 mV</text><rect x="1690.48" y="377.3" width="55.52" height="13" fill="#000"/><text x="1746" y="389.4" text-anchor="end" font-size="13.5" fill="#8cc63f">400 mV</text><rect x="1690.48" y="400.65" width="55.52" height="13" fill="#000"/><text x="1746" y="412.75" text-anchor="end" font-size="13.5" fill="#8cc63f">200 mV</text><rect x="1716.74" y="424" width="29.26" height="13" fill="#000"/><text x="1746" y="436.1" text-anchor="end" font-size="13.5" fill="#8cc63f">0 V</text><rect x="1685.98" y="447.35" width="60.02" height="13" fill="#000"/><text x="1746" y="459.45" text-anchor="end" font-size="13.5" fill="#8cc63f">-200 mV</text><rect x="1685.98" y="470.7" width="60.02" height="13" fill="#000"/><text x="1746" y="482.8" text-anchor="end" font-size="13.5" fill="#8cc63f">-400 mV</text><rect x="1685.98" y="494.05" width="60.02" height="13" fill="#000"/><text x="1746" y="506.15" text-anchor="end" font-size="13.5" fill="#8cc63f">-600 mV</text><rect x="1679.98" y="542.2" width="66.02" height="13" fill="#000"/><text x="1746" y="554.3" text-anchor="end" font-size="13.5" fill="#e8922a">9.935 mT</text><rect x="1679.98" y="565.55" width="66.02" height="13" fill="#000"/><text x="1746" y="577.65" text-anchor="end" font-size="13.5" fill="#e8922a">8.693 mT</text><rect x="1679.98" y="588.9" width="66.02" height="13" fill="#000"/><text x="1746" y="601" text-anchor="end" font-size="13.5" fill="#e8922a">7.452 mT</text><rect x="1679.98" y="612.25" width="66.02" height="13" fill="#000"/><text x="1746" y="624.35" text-anchor="end" font-size="13.5" fill="#e8922a">6.210 mT</text><rect x="1679.98" y="635.6" width="66.02" height="13" fill="#000"/><text x="1746" y="647.7" text-anchor="end" font-size="13.5" fill="#e8922a">4.968 mT</text><rect x="1679.98" y="658.95" width="66.02" height="13" fill="#000"/><text x="1746" y="671.05" text-anchor="end" font-size="13.5" fill="#e8922a">3.726 mT</text><rect x="1679.98" y="682.3" width="66.02" height="13" fill="#000"/><text x="1746" y="694.4" text-anchor="end" font-size="13.5" fill="#e8922a">2.484 mT</text><rect x="1679.98" y="705.65" width="66.02" height="13" fill="#000"/><text x="1746" y="717.75" text-anchor="end" font-size="13.5" fill="#e8922a">1.242 mT</text><rect x="1717.74" y="729" width="28.26" height="13" fill="#000"/><text x="1746" y="741.1" text-anchor="end" font-size="13.5" fill="#e8922a">0 T</text><rect x="1676.19" y="770.15" width="69.81" height="13" fill="#000"/><text x="1746" y="782.25" text-anchor="end" font-size="13.5" fill="#8a48a8">279.640 A</text><rect x="1717.48" y="793.5" width="28.52" height="13" fill="#000"/><text x="1746" y="805.6" text-anchor="end" font-size="13.5" fill="#8a48a8">0 A</text><rect x="1671.7" y="816.85" width="74.3" height="13" fill="#000"/><text x="1746" y="828.95" text-anchor="end" font-size="13.5" fill="#8a48a8">-279.640 A</text><rect x="1671.7" y="840.2" width="74.3" height="13" fill="#000"/><text x="1746" y="852.3" text-anchor="end" font-size="13.5" fill="#8a48a8">-559.281 A</text><rect x="1671.7" y="863.55" width="74.3" height="13" fill="#000"/><text x="1746" y="875.65" text-anchor="end" font-size="13.5" fill="#8a48a8">-838.921 A</text><rect x="1657.7" y="886.9" width="88.3" height="13" fill="#000"/><text x="1746" y="899" text-anchor="end" font-size="13.5" fill="#8a48a8">-1.118562 kA</text><rect x="1656.7" y="910.25" width="89.3" height="13" fill="#000"/><text x="1746" y="922.35" text-anchor="end" font-size="13.5" fill="#8a48a8">-1.398202 kA</text><rect x="1656.7" y="933.6" width="89.3" height="13" fill="#000"/><text x="1746" y="945.7" text-anchor="end" font-size="13.5" fill="#8a48a8">-1.677843 kA</text><rect x="1656.7" y="956.95" width="89.3" height="13" fill="#000"/><text x="1746" y="969.05" text-anchor="end" font-size="13.5" fill="#8a48a8">-1.957483 kA</text><text x="55.5" y="987" text-anchor="middle" font-size="13.5" fill="#b4b4b4">0 s</text><text x="230.38" y="987" text-anchor="middle" font-size="13.5" fill="#b4b4b4">4 ms</text><text x="405.25" y="987" text-anchor="middle" font-size="13.5" fill="#b4b4b4">8 ms</text><text x="580.12" y="987" text-anchor="middle" font-size="13.5" fill="#b4b4b4">12 ms</text><text x="755" y="987" text-anchor="middle" font-size="13.5" fill="#b4b4b4">16 ms</text><text x="929.88" y="987" text-anchor="middle" font-size="13.5" fill="#b4b4b4">20 ms</text><text x="1104.75" y="987" text-anchor="middle" font-size="13.5" fill="#b4b4b4">24 ms</text><text x="1279.62" y="987" text-anchor="middle" font-size="13.5" fill="#b4b4b4">28 ms</text><text x="1454.5" y="987" text-anchor="middle" font-size="13.5" fill="#b4b4b4">32 ms</text><text x="1629.38" y="987" text-anchor="middle" font-size="13.5" fill="#b4b4b4">36 ms</text><line x1="3" y1="430.5" x2="1751" y2="430.5" stroke="#8cc63f" stroke-width="1.6"/><polyline points="3,265.8 4,265.8 5,265.8 6,265.8 7,265.8 8,265.8 9,265.8 10,265.8 11,265.8 12,265.8 13,265.8 14,265.8 15,265.8 16,265.8 17,265.8 18,265.8 19,265.8 20,265.8 21,265.8 22,265.8 23,265.8 24,265.8 25,265.8 26,265.8 27,265.8 28,265.8 29,265.8 30,265.8 31,265.8 32,265.8 33,265.8 34,265.8 35,265.8 36,265.8 37,265.8 38,265.8 39,265.8 40,265.8 41,265.8 42,265.8 43,265.8 44,265.8 45,265.8 46,265.8 47,265.8 48,265.8 49,265.8 50,265.8 51,265.8 52,265.8 53,265.8 54,265.8 55,265.8 56,265.8 57,265.8 58,265.8 59,265.8 60,265.8 61,265.8 62,265.8 63,265.8 64,265.8 65,265.8 66,265.8 67,265.8 68,265.8 69,265.8 70,265.8 71,265.8 72,265.8 73,265.8 74,265.8 75,265.8 76,265.8 77,265.8 78,265.8 79,265.8 80,265.8 81,265.8 82,265.8 83,265.8 84,265.8 85,265.8 86,265.8 87,265.8 88,265.8 89,265.8 90,265.8 91,265.8 92,265.8 93,265.8 94,265.8 95,265.8 96,265.8 97,265.8 98,265.8 99,265.8 100,265.8 101,265.8 102,265.8 103,265.8 104,265.8 105,265.8 106,265.8 107,265.8 108,265.8 109,265.8 110,265.8 111,265.8 112,265.8 113,265.8 114,265.8 115,265.8 116,265.8 117,265.8 118,265.8 119,265.8 120,265.8 121,265.8 122,265.8 123,265.8 124,265.8 125,265.8 126,265.8 127,265.8 128,265.8 129,265.8 130,265.8 131,265.8 132,265.8 133,265.8 134,265.8 135,265.8 136,265.8 137,265.8 138,265.8 139,265.8 140,265.8 141,265.8 142,265.8 143,265.8 144,265.8 145,265.8 146,265.8 147,265.8 148,265.8 149,265.8 150,265.8 151,265.8 152,265.8 153,265.8 154,265.8 155,265.8 156,265.8 157,265.8 158,265.8 159,265.8 160,265.8 161,265.8 162,265.8 163,265.8 164,265.8 165,265.8 166,265.8 167,265.8 168,265.8 169,265.8 170,265.8 171,265.8 172,265.8 173,265.8 174,265.8 175,265.8 176,265.8 177,265.8 178,265.8 179,265.8 180,265.8 181,265.8 182,265.8 183,265.8 184,265.8 185,265.8 186,265.8 187,265.8 188,265.8 189,265.8 190,265.8 191,265.8 192,265.8 193,265.8 194,265.8 195,265.8 196,265.8 197,265.8 198,265.8 199,265.8 200,265.8 201,265.8 202,265.8 203,265.8 204,265.8 205,265.8 206,265.8 207,265.8 208,265.8 209,265.8 210,265.8 211,265.8 212,265.8 213,265.8 214,265.8 215,265.8 216,265.8 217,265.8 218,265.8 219,265.8 220,265.8 221,265.8 222,265.8 223,265.8 224,265.8 225,265.8 226,265.8 227,265.8 228,265.8 229,265.8 230,265.8 231,265.8 232,265.8 233,265.8 234,265.8 235,265.8 236,265.8 237,265.8 238,265.8 239,265.8 240,265.8 241,265.8 242,265.8 243,265.8 244,265.8 245,265.8 246,265.8 247,265.8 248,265.8 249,265.8 250,265.8 251,265.8 252,265.8 253,265.8 254,265.8 255,265.8 256,265.8 257,265.8 258,265.8 259,265.8 260,265.8 261,265.8 262,265.8 263,265.8 264,265.8 265,265.8 266,265.8 267,265.8 268,265.8 269,265.8 270,265.8 271,265.8 272,265.8 273,265.8 274,265.8 275,265.8 276,265.8 277,265.8 278,265.8 279,265 280,264.2 281,263.4 282,262.6 283,261.8 284,261.87 285,261.95 286,262.02 287,262.09 288,262.16 289,262.24 290,262.31 291,262.38 292,262.45 293,262.53 294,262.6 295,262.6 296,262.61 297,262.61 298,262.61 299,262.61 300,262.62 301,262.62 302,262.62 303,262.63 304,262.63 305,262.63 306,262.64 307,262.64 308,262.64 309,262.64 310,262.65 311,262.65 312,262.65 313,262.66 314,262.66 315,262.66 316,262.67 317,262.67 318,262.67 319,262.67 320,262.68 321,262.68 322,262.68 323,262.69 324,262.69 325,262.69 326,262.7 327,262.7 328,262.7 329,262.7 330,262.71 331,262.71 332,262.71 333,262.72 334,262.72 335,262.72 336,262.72 337,262.73 338,262.73 339,262.73 340,262.74 341,262.74 342,262.74 343,262.75 344,262.75 345,262.75 346,262.75 347,262.76 348,262.76 349,262.76 350,262.77 351,262.77 352,262.77 353,262.78 354,262.78 355,262.78 356,262.78 357,262.79 358,262.79 359,262.79 360,262.8 361,262.8 362,262.8 363,262.8 364,262.81 365,262.81 366,262.81 367,262.82 368,262.82 369,262.82 370,262.83 371,262.83 372,262.83 373,262.83 374,262.84 375,262.84 376,262.84 377,262.85 378,262.85 379,262.85 380,262.86 381,262.86 382,262.86 383,262.86 384,262.87 385,262.87 386,262.87 387,262.88 388,262.88 389,262.88 390,262.89 391,262.89 392,262.89 393,262.89 394,262.9 395,262.9 396,263.04 397,263.18 398,263.32 399,263.46 400,263.6 401,263.61 402,263.61 403,263.62 404,263.63 405,263.64 406,263.64 407,263.65 408,263.66 409,263.67 410,263.67 411,263.68 412,263.69 413,263.69 414,263.7 415,263.71 416,263.72 417,263.72 418,263.73 419,263.74 420,263.75 421,263.75 422,263.76 423,263.77 424,263.77 425,263.78 426,263.79 427,263.8 428,263.8 429,263.81 430,263.82 431,263.83 432,263.83 433,263.84 434,263.85 435,263.85 436,263.86 437,263.87 438,263.88 439,263.88 440,263.89 441,263.9 442,263.91 443,263.91 444,263.92 445,263.93 446,263.93 447,263.94 448,263.95 449,263.96 450,263.96 451,263.97 452,263.98 453,263.99 454,263.99 455,264 456,264.01 457,264.01 458,264.02 459,264.03 460,264.04 461,264.04 462,264.05 463,264.06 464,264.07 465,264.07 466,264.08 467,264.09 468,264.09 469,264.1 470,264.11 471,264.12 472,264.12 473,264.13 474,264.14 475,264.15 476,264.15 477,264.16 478,264.17 479,264.17 480,264.18 481,264.19 482,264.2 483,264.2 484,264.21 485,264.22 486,264.23 487,264.23 488,264.24 489,264.25 490,264.25 491,264.26 492,264.27 493,264.28 494,264.28 495,264.29 496,264.3 497,264.31 498,264.31 499,264.32 500,264.33 501,264.33 502,264.34 503,264.35 504,264.36 505,264.36 506,264.37 507,264.38 508,264.39 509,264.39 510,264.4 511,264.4 512,264.4 513,264.41 514,264.41 515,264.41 516,264.41 517,264.41 518,264.42 519,264.42 520,264.42 521,264.42 522,264.42 523,264.43 524,264.43 525,264.43 526,264.43 527,264.43 528,264.44 529,264.44 530,264.44 531,264.44 532,264.44 533,264.45 534,264.45 535,264.45 536,264.45 537,264.45 538,264.46 539,264.46 540,264.46 541,264.46 542,264.46 543,264.47 544,264.47 545,264.47 546,264.47 547,264.47 548,264.48 549,264.48 550,264.48 551,264.48 552,264.48 553,264.49 554,264.49 555,264.49 556,264.49 557,264.49 558,264.5 559,264.5 560,264.5 561,264.5 562,264.5 563,264.51 564,264.51 565,264.51 566,264.51 567,264.51 568,264.52 569,264.52 570,264.52 571,264.52 572,264.52 573,264.53 574,264.53 575,264.53 576,264.53 577,264.53 578,264.54 579,264.54 580,264.54 581,264.54 582,264.54 583,264.55 584,264.55 585,264.55 586,264.55 587,264.55 588,264.56 589,264.56 590,264.56 591,264.56 592,264.56 593,264.57 594,264.57 595,264.57 596,264.57 597,264.57 598,264.58 599,264.58 600,264.58 601,264.58 602,264.58 603,264.59 604,264.59 605,264.59 606,264.59 607,264.59 608,264.6 609,264.6 610,264.6 611,264.6 612,264.6 613,264.61 614,264.61 615,264.61 616,264.61 617,264.61 618,264.62 619,264.62 620,264.62 621,264.62 622,264.62 623,264.63 624,264.63 625,264.63 626,264.63 627,264.63 628,264.64 629,264.64 630,264.64 631,264.64 632,264.64 633,264.65 634,264.65 635,264.65 636,264.65 637,264.66 638,264.66 639,264.66 640,264.66 641,264.66 642,264.67 643,264.67 644,264.67 645,264.67 646,264.67 647,264.68 648,264.68 649,264.68 650,264.68 651,264.68 652,264.69 653,264.69 654,264.69 655,264.69 656,264.69 657,264.7 658,264.7 659,264.7 660,264.7 661,264.7 662,264.71 663,264.71 664,264.71 665,264.71 666,264.71 667,264.72 668,264.72 669,264.72 670,264.72 671,264.72 672,264.73 673,264.73 674,264.73 675,264.73 676,264.73 677,264.74 678,264.74 679,264.74 680,264.74 681,264.74 682,264.75 683,264.75 684,264.75 685,264.75 686,264.75 687,264.76 688,264.76 689,264.76 690,264.76 691,264.76 692,264.77 693,264.77 694,264.77 695,264.77 696,264.77 697,264.78 698,264.78 699,264.78 700,264.78 701,264.78 702,264.79 703,264.79 704,264.79 705,264.79 706,264.79 707,264.8 708,264.8 709,264.8 710,264.8 711,264.8 712,264.81 713,264.81 714,264.81 715,264.81 716,264.81 717,264.82 718,264.82 719,264.82 720,264.82 721,264.82 722,264.83 723,264.83 724,264.83 725,264.83 726,264.83 727,264.84 728,264.84 729,264.84 730,264.84 731,264.84 732,264.85 733,264.85 734,264.85 735,264.85 736,264.85 737,264.86 738,264.86 739,264.86 740,264.86 741,264.86 742,264.87 743,264.87 744,264.87 745,264.87 746,264.87 747,264.88 748,264.88 749,264.88 750,264.88 751,264.88 752,264.89 753,264.89 754,264.89 755,264.89 756,264.89 757,264.9 758,264.9 759,264.9 759.4,265 764.5,254 765,253.82 766,253.65 767,254.42 768,253.68 769,254.4 770,254.24 771,253.88 772,254.58 773,253.99 774,254.62 775,254.18 776,254.28 777,254.82 778,255.45 779,254.54 780,254.75 781,255.38 782,255.9 783,255.45 784,255.27 785,256.15 786,254.92 787,256.13 788,255.41 789,255.27 790,255.31 791,255.64 792,256.43 793,255.61 794,256.24 795,256.39 796,256.09 797,256.4 798,255.8 799,255.86 800,256.14 801,256.87 802,256.59 803,256.5 804,256.95 805,256.84 806,256.69 807,257.46 808,257.4 809,256.83 810,257.36 811,257.36 812,257.93 813,257.79 814,257.24 815,258.28 816,257.15 817,257.64 818,258.18 819,257.41 820,257.95 821,257.39 822,258.34 823,258.55 824,258.35 825,258.85 826,258.13 827,258.74 828,258.67 829,258.72 830,258.61 831,259.22 832,259.44 833,258.85 834,259.19 835,258.41 836,259.38 837,259.38 838,259.93 839,259.76 840,259.08 841,259.29 842,259.76 843,258.93 844,259.61 845,259.27 846,259.27 847,259.26 848,260.33 849,259.5 850,259.74 851,260.01 852,260.75 853,259.72 854,260.3 855,260.52 856,261.05 857,261.03 858,261.17 859,260.42 860,260.68 861,260.67 862,261.48 863,261.65 864,260.59 865,260.7 866,260.85 867,260.92 868,261.35 869,261.56 870,261.18 871,260.88 872,261.54 873,261.54 874,261.88 875,262.5 876,262.2 877,262.03 878,262.24 879,262.39 880,261.59 881,262.85 882,262.75 883,262.95 884,262.5 885,262.89 886,263.24 887,263.56 888,263.85 889,264.11 890,264.35 891,264.56 892,264.76 893,264.93 894,265.09 895,265.24 896,265.37 897,265.48 898,265.59 899,265.69 900,265.77 901,265.85 902,265.92 903,265.99 904,266.05 905,266.1 906,266.15 907,266.19 908,266.23 909,266.26 910,266.3 911,266.32 912,266.35 913,266.37 914,266.4 915,266.42 916,266.43 917,266.45 918,266.46 919,266.48 920,266.49 921,266.5 922,266.51 923,266.52 924,266.52 925,266.53 926,266.54 927,266.54 928,266.55 929,266.55 930,266.6 931,266.6 932,266.6 933,267.2 934,266.6 935,267.2 936,267.2 937,267.2 938,267.2 939,266.6 940,267.2 943,267.2 946,267.2 949,267.2 952,266.6 955,267.2 958,266.6 961,266.6 964,267.2 967,266.6 970,266.6 973,266.6 976,267.2 979,266.6 982,266.6 985,266.6 988,266.6 991,267.2 994,267.2 997,266.6 1000,266.6 1003,266.6 1006,267.2 1009,267.2 1012,266.6 1015,266.6 1018,267.2 1021,266.6 1024,267.2 1027,266.6 1030,266.6 1033,266.6 1036,266.6 1039,266.6 1042,266.6 1045,267.2 1048,266.6 1051,266.6 1054,266.6 1057,266.6 1060,267.2 1063,266.6 1066,266.6 1069,266.6 1072,266.6 1075,266.6 1078,266.6 1081,267.2 1084,266.6 1087,266.6 1090,267.2 1093,267.2 1096,266.6 1099,266.6 1102,266.6 1105,266.6 1108,266.6 1111,266.6 1114,266.6 1117,266.6 1120,266.6 1123,267.2 1126,267.2 1129,267.2 1132,267.2 1135,266.6 1138,266.6 1141,266.6 1144,266.6 1147,266.6 1150,266.6 1153,267.2 1156,266.6 1159,266.6 1162,266.6 1165,266.6 1168,266.6 1171,267.2 1174,266.6 1177,266.6 1180,266.6 1183,266.6 1186,266.6 1189,266.6 1192,266.6 1195,266.6 1198,267.2 1201,267.2 1204,267.2 1207,266.6 1210,266.6 1213,267.2 1216,266.6 1219,266.6 1222,266.6 1223,266.6 1224,266.6 1225,266.6 1226,266.4 1227,266.2 1228,266 1229,265.8 1230,265.6 1231,265.6 1232,265.6 1233,265.6 1234,265.6 1235,265.6 1238,265.6 1241,265.6 1244,265.6 1247,265.6 1250,265.6 1253,265.6 1256,265.6 1259,265.6 1262,265.6 1265,265.6 1268,265.6 1271,265.6 1274,265.6 1277,265.6 1280,265.6 1283,265.6 1286,265.6 1289,265.6 1292,265.6 1295,265.6 1298,265.6 1301,265.6 1304,265.6 1307,265.6 1310,265.6 1313,265.6 1316,265.6 1319,265.6 1322,265.6 1325,265.6 1328,265.6 1331,265.6 1334,265.6 1337,265.6 1340,265.6 1343,265.6 1346,265.6 1349,265.6 1352,265.6 1355,265.6 1358,265.6 1361,265.6 1364,265.6 1367,265.6 1368,265.6 1369,265.6 1370,265.6 1371,265.6 1372,266.4 1373,267.2 1374,268 1375,268.8 1376,268.56 1377,268.32 1378,268.08 1379,267.84 1380,267.6 1381,267.6 1382,267.6 1383,267.6 1384,267.6 1385,267.6 1388,267.6 1391,267.6 1394,267.6 1397,267.6 1400,267.6 1403,267.6 1406,267.6 1409,267.6 1412,267.6 1415,267.6 1418,267.6 1421,267.6 1424,267.6 1427,267.6 1430,267.6 1433,267.6 1436,267.6 1439,267.6 1442,267.6 1445,267.6 1448,267.6 1451,267.6 1454,267.6 1457,267.6 1460,267.6 1463,267.6 1466,267.6 1469,267.6 1472,267.6 1475,267.6 1478,267.6 1481,267.6 1484,267.6 1487,267.6 1490,267.6 1493,267.6 1496,267.6 1499,267.6 1502,267.6 1505,267.6 1508,267.6 1511,267.6 1514,267.6 1517,267.6 1520,267.6 1523,267.6 1526,267.6 1529,267.6 1532,267.6 1535,267.6 1538,267.6 1541,267.6 1544,267.6 1547,267.6 1550,267.6 1553,267.6 1556,267.6 1559,267.6 1562,267.6 1565,267.6 1568,267.6 1571,267.6 1574,267.6 1577,267.6 1580,267.6 1583,267.6 1586,267.6 1589,267.6 1592,267.6 1595,267.6 1598,267.6 1601,267.6 1604,267.6 1607,267.6 1610,267.6 1613,267.6 1616,267.6 1619,267.6 1622,267.6 1625,267.6 1628,267.6 1631,267.6 1634,267.6 1637,267.6 1640,267.6 1643,267.6 1646,267.6 1649,267.6 1652,267.6 1655,267.6 1658,267.6 1661,267.6 1664,267.6 1667,267.6 1670,267.6 1673,267.6 1676,267.6 1679,267.6 1682,267.6 1685,267.6 1688,267.6 1691,267.6 1694,267.6 1697,267.6 1700,267.6 1703,267.6 1706,267.6 1709,267.6 1712,267.6 1715,267.6 1718,267.6 1721,267.6 1724,267.6 1727,267.6 1730,267.6 1733,267.6 1736,267.6 1739,267.6 1742,267.6 1745,267.6 1748,267.6 1751,267.6" fill="none" stroke="#f4ea1e" stroke-width="1.3" stroke-linejoin="round"/><path d="M764,254.16V291H766V254.16ZM766,254.16H767V192H766ZM767,254.16H768V232H767ZM769,254.52V291H771V254.52ZM771,254.52H772V192H771ZM772,254.52H773V233H772ZM776,254.95V291H778V254.95ZM778,254.95H779V192H778ZM779,254.95H780V233H779ZM784,255.58V291H786V255.58ZM786,255.58H787V193H786ZM787,255.58H788V234H787ZM791,256.1V291H793V256.1ZM793,256.1H794V196H793ZM794,256.1H795V235H794ZM801,256.72V291H803V256.72ZM803,256.72H804V196H803ZM804,256.72H805V236H804ZM811,257.49V291H813V257.49ZM813,257.49H814V199H813ZM814,257.49H815V237H814ZM819,258.07V291H821V258.07ZM821,258.07H822V198H821ZM822,258.07H823V237H822ZM827,258.63V291H829V258.63ZM829,258.63H830V201H829ZM830,258.63H831V238H830ZM837,259.34V291H839V259.34ZM839,259.34H840V202H839ZM840,259.34H841V239H840ZM852,260.4V291H854V260.4ZM854,260.4H855V206H854ZM855,260.4H856V241H855ZM865,261.25V291H867V261.25ZM867,261.25H868V207H867ZM868,261.25H869V242H868ZM881,262.47V291H883V262.47ZM883,262.47H884V208H883ZM884,262.47H885V243H884Z" fill="#f4ea1e"/><polyline points="3,266.4 6,266.4 9,266.4 12,266.4 15,266.4 18,267.2 21,266.4 24,266.4 27,266.4 30,266.4 33,266.4 36,266.4 39,266.4 42,266.4 45,266.4 48,267.2 51,266.4 54,266.4 57,266.4 60,267.2 63,267.2 66,266.4 69,266.4 72,266.4 75,267.2 78,266.4 81,266.4 84,266.4 87,266.4 90,266.4 93,267.2 96,266.4 99,266.4 102,266.4 105,267.2 108,266.4 111,266.4 114,266.4 117,266.4 120,266.4 123,266.4 126,266.4 129,267.2 132,266.4 135,266.4 138,267.2 141,266.4 144,266.4 147,266.4 150,267.2 153,267.2 156,266.4 159,266.4 162,266.4 165,267.2 168,266.4 171,267.2 174,266.4 177,267.2 180,267.2 183,266.4 186,266.4 189,266.4 192,267.2 195,266.4 198,266.4 201,266.4 204,266.4 207,266.4 210,266.4 213,266.4 216,266.4 219,266.4 222,267.2 225,266.4 228,266.4 231,267.2 234,267.2 237,266.4 240,266.4 243,266.4 246,267.2 249,267.2 252,266.4 255,267.2 258,266.4 261,266.4 264,266.4 267,266.4 270,266.4 273,266.4 276,266.4 279,267.2" fill="none" stroke="#f4ea1e" stroke-width="1"/><polyline points="3,733.5 4,733.5 4,732.5 13,732.5 13,731.5 22,731.5 22,730.5 32,730.5 32,729.5 41,729.5 41,728.5 51,728.5 51,727.5 60,727.5 60,726.5 69,726.5 69,725.5 77,725.5 77,724.5 86,724.5 86,723.5 95,723.5 95,722.5 104,722.5 104,721.5 112,721.5 112,720.5 121,720.5 121,719.5 130,719.5 130,718.5 139,718.5 139,717.5 147,717.5 147,716.5 156,716.5 156,715.5 165,715.5 165,714.5 174,714.5 174,713.5 182,713.5 182,712.5 191,712.5 191,711.5 200,711.5 200,710.5 209,710.5 209,709.5 217,709.5 217,708.5 226,708.5 226,707.5 234,707.5 234,706.5 241,706.5 241,705.5 248,705.5 248,704.5 255,704.5 255,703.5 262,703.5 262,702.5 269,702.5 269,701.5 276,701.5 276,700.5 283,700.5 283,699.5 290,699.5 290,698.5 297,698.5 297,697.5 304,697.5 304,696.5 311,696.5 311,695.5 318,695.5 318,694.5 325,694.5 325,693.5 332,693.5 332,692.5 339,692.5 339,691.5 346,691.5 346,690.5 353,690.5 353,689.5 360,689.5 360,688.5 367,688.5 367,687.5 374,687.5 374,686.5 381,686.5 381,685.5 388,685.5 388,684.5 395,684.5 395,683.5 402,683.5 402,682.5 409,682.5 409,681.5 416,681.5 416,680.5 422,680.5 422,679.5 429,679.5 429,678.5 436,678.5 436,677.5 442,677.5 442,676.5 449,676.5 449,675.5 456,675.5 456,674.5 462,674.5 462,673.5 469,673.5 469,672.5 476,672.5 476,671.5 482,671.5 482,670.5 490,670.5 490,669.5 497,669.5 497,668.5 504,668.5 504,667.5 511,667.5 511,666.5 519,666.5 519,665.5 526,665.5 526,664.5 533,664.5 533,663.5 541,663.5 541,662.5 548,662.5 548,661.5 555,661.5 555,660.5 562,660.5 562,659.5 570,659.5 570,658.5 577,658.5 577,657.5 585,657.5 585,656.5 595,656.5 595,655.5 605,655.5 605,654.5 615,654.5 615,653.5 624,653.5 624,652.5 634,652.5 634,651.5 644,651.5 644,650.5 654,650.5 654,649.5 663,649.5 663,648.5 673,648.5 673,647.5 683,647.5 683,646.5 693,646.5 693,645.5 702,645.5 702,644.5 712,644.5 712,643.5 721,643.5 721,642.5 730,642.5 730,641.5 739,641.5 739,640.5 748,640.5 748,639.5 756,639.5 756,640.5 757,640.5 757,639.5 758,639.5 758,638.5 759,638.5 759,637.5 760,637.5 760,638.5 762,638.5 762,639.5 763,639.5 763,638.5 768,638.5 768,637.5 771,637.5 771,636.5 772,636.5 772,637.5 774,637.5 774,636.5 775,636.5 775,637.5 778,637.5 778,636.5 780,636.5 780,635.5 781,635.5 781,636.5 783,636.5 783,635.5 784,635.5 784,636.5 789,636.5 789,635.5 792,635.5 792,634.5 793,634.5 793,635.5 799,635.5 799,634.5 804,634.5 804,635.5 805,635.5 805,634.5 809,634.5 809,633.5 810,633.5 810,634.5 811,634.5 811,633.5 816,633.5 816,634.5 817,634.5 817,633.5 820,633.5 820,632.5 822,632.5 822,631.5 823,631.5 823,632.5 828,632.5 828,631.5 829,631.5 829,632.5 830,632.5 830,631.5 834,631.5 834,632.5 835,632.5 835,631.5 837,631.5 837,630.5 838,630.5 838,631.5 840,631.5 840,630.5 843,630.5 843,629.5 844,629.5 844,630.5 846,630.5 846,629.5 847,629.5 847,630.5 851,630.5 851,629.5 852,629.5 852,628.5 853,628.5 853,629.5 858,629.5 858,628.5 859,628.5 859,629.5 861,629.5 861,628.5 864,628.5 864,627.5 865,627.5 865,628.5 867,628.5 867,629.5 868,629.5 868,628.5 870,628.5 870,627.5 876,627.5 876,628.5 877,628.5 877,627.5 882,627.5 882,626.5 885,626.5 885,625.5 886,625.5 886,626.5 891,626.5 891,625.5 903,625.5 903,624.5 913,624.5 913,623.5 923,623.5 923,622.5 934,622.5 934,621.5 948,621.5 948,620.5 961,620.5 961,619.5 974,619.5 974,618.5 987,618.5 987,617.5 1001,617.5 1001,616.5 1012,616.5 1012,615.5 1023,615.5 1023,614.5 1034,614.5 1034,613.5 1045,613.5 1045,612.5 1056,612.5 1056,611.5 1067,611.5 1067,610.5 1078,610.5 1078,609.5 1089,609.5 1089,608.5 1100,608.5 1100,607.5 1110,607.5 1110,606.5 1120,606.5 1120,605.5 1130,605.5 1130,604.5 1140,604.5 1140,603.5 1149,603.5 1149,602.5 1159,602.5 1159,601.5 1169,601.5 1169,600.5 1179,600.5 1179,599.5 1189,599.5 1189,598.5 1198,598.5 1198,597.5 1208,597.5 1208,596.5 1218,596.5 1218,595.5 1228,595.5 1228,594.5 1237,594.5 1237,593.5 1247,593.5 1247,592.5 1257,592.5 1257,591.5 1267,591.5 1267,590.5 1277,590.5 1277,589.5 1287,589.5 1287,588.5 1298,588.5 1298,587.5 1310,587.5 1310,586.5 1321,586.5 1321,585.5 1332,585.5 1332,584.5 1343,584.5 1343,583.5 1355,583.5 1355,582.5 1366,582.5 1366,581.5 1377,581.5 1377,580.5 1388,580.5 1388,579.5 1399,579.5 1399,578.5 1411,578.5 1411,577.5 1422,577.5 1422,576.5 1433,576.5 1433,575.5 1444,575.5 1444,574.5 1456,574.5 1456,573.5 1468,573.5 1468,572.5 1481,572.5 1481,571.5 1494,571.5 1494,570.5 1507,570.5 1507,569.5 1520,569.5 1520,568.5 1533,568.5 1533,567.5 1546,567.5 1546,566.5 1558,566.5 1558,565.5 1571,565.5 1571,564.5 1584,564.5 1584,563.5 1597,563.5 1597,562.5 1610,562.5 1610,561.5 1623,561.5 1623,560.5 1635,560.5 1635,559.5 1645,559.5 1645,558.5 1656,558.5 1656,557.5 1667,557.5 1667,556.5 1678,556.5 1678,555.5 1688,555.5 1688,554.5 1699,554.5 1699,553.5 1710,553.5 1710,552.5 1720,552.5 1720,551.5 1731,551.5 1731,550.5 1742,550.5 1742,549.5 1752,549.5" fill="none" stroke="#ee8f22" stroke-width="1.4" stroke-linejoin="miter"/><polyline points="3,800.5 25,800.5 25,801.5 45,801.5 45,802.5 60,802.5 60,803.5 75,803.5 75,804.5 98,804.5 98,805.5 128,805.5 128,806.5 157,806.5 157,807.5 186,807.5 186,808.5 216,808.5 216,809.5 260,809.5 260,810.5 279,810.5 279,812.5 280,812.5 280,813.5 281,813.5 281,815.5 282,815.5 282,817.5 283,817.5 283,818.5 366,818.5 366,819.5 393,819.5 393,820.5 421,820.5 421,821.5 449,821.5 449,822.5 477,822.5 477,823.5 505,823.5 505,824.5 533,824.5 533,825.5 561,825.5 561,826.5 589,826.5 589,827.5 617,827.5 617,828.5 629,828.5 629,829.5 630,829.5 630,830.5 634,830.5 634,828.5 642,828.5 642,829.5 665,829.5 665,830.5 687,830.5 687,831.5 710,831.5 710,832.5 733,832.5 733,833.5 755,833.5 755,834.5 760,834.2 765,855 766,853.83 767,854.11 768,854.28 769,854.18 770,855.18 771,853.96 772,854.38 773,853.52 774,853.83 775,852.95 776,853.42 777,852.77 778,854.4 779,853.88 780,852.92 781,853.52 782,854.53 783,852.45 784,854.07 785,853.06 786,853.12 787,853.85 788,852.7 789,852.88 790,853.23 791,853.84 792,852.22 793,853.31 794,852.92 795,852.66 796,852.01 797,851.79 798,850.99 799,851.09 800,850.86 801,852.37 802,851.12 803,850.81 804,850.53 805,852.26 806,852.24 807,851.67 808,850.65 809,850.47 810,850.5 811,850.81 812,850 813,850.6 814,850.07 815,851.66 816,851.6 817,850.49 818,849.67 819,851.31 820,849.65 821,849.67 822,848.73 823,849.55 824,849.69 825,849.67 826,848.85 827,849.49 828,848.21 829,848.74 830,848.23 831,848.89 832,847.94 833,847.8 834,848.39 835,848.13 836,848.89 837,848.66 838,849.11 839,848.79 840,848.84 841,849.15 842,847.88 843,847.64 844,849.13 845,847.04 846,848.33 847,848.05 848,846.52 849,848.33 850,848.38 851,847.65 852,847.82 853,847.92 854,846.21 855,847.05 856,846.91 857,847.62 858,847.46 859,847.42 860,846.75 861,847.4 862,846.81 863,846.74 864,845.54 865,844.98 866,845.13 867,845.59 868,844.89 869,846.55 870,845.8 871,845.87 872,845.78 873,845.82 874,845.28 875,844.02 876,845.84 877,845.63 878,844.95 879,844.94 880,845.15 881,843.64 882,845.16 883,843.91 884,844.35 885,844.2 886,844.05 887,843.91 888,843.76 889,843.61 890,843.46 891,843.31 892,843.16 893,843.01 894,842.86 895,842.72 896,842.57 897,842.42 898,842.27 899,842.12 900,841.97 901,841.82 902,841.68 903,841.53 904,841.38 905,841.23 906,841.08 907,840.93 908,840.78 909,840.64 910,840.49 911,840.34 912,840.19 913,840.04 914,839.89 915,839.74 916,839.59 917,839.45 918,839.3 919,839.15 920,839 921,839.01 922,839.03 923,839.04 924,839.06 925,839.08 926,839.09 927,839.11 928,839.12 929,839.13 930,839.15 931,839.16 932,839.18 933,839.2 934,839.21 935,839.23 936,839.24 937,839.25 938,839.27 939,839.28 940,839.3 941,839.32 942,839.33 943,839.35 944,839.36 945,839.38 946,839.39 947,839.4 948,839.42 949,839.43 950,839.45 951,839.47 952,839.48 953,839.5 954,839.51 955,839.52 956,839.54 957,839.55 958,839.57 959,839.59 960,839.5 969,839.5 969,840.5 990,840.5 990,841.5 1011,841.5 1011,842.5 1032,842.5 1032,843.5 1053,843.5 1053,844.5 1075,844.5 1075,845.5 1096,845.5 1096,846.5 1117,846.5 1117,847.5 1138,847.5 1138,848.5 1159,848.5 1159,849.5 1180,849.5 1180,850.5 1201,850.5 1201,851.5 1223,851.5 1223,852.5 1244,852.5 1244,853.5 1265,853.5 1265,854.5 1286,854.5 1286,855.5 1307,855.5 1307,856.5 1328,856.5 1328,857.5 1349,857.5 1349,858.5 1369,858.5 1370,859.5 1371,858.5 1372,856.5 1373,855.5 1374,854.5 1375,853.5 1376,852.5 1377,852.5 1378,853.5 1379,853.5 1382,853.5 1382,854.5 1386,854.5 1386,855.5 1408,855.5 1408,856.5 1430,856.5 1430,857.5 1452,857.5 1452,858.5 1474,858.5 1474,859.5 1496,859.5 1496,860.5 1518,860.5 1518,861.5 1540,861.5 1540,862.5 1562,862.5 1562,863.5 1584,863.5 1584,864.5 1606,864.5 1606,865.5 1628,865.5 1628,866.5 1649,866.5 1649,867.5 1671,867.5 1671,868.5 1693,868.5 1693,869.5 1715,869.5 1715,870.5 1737,870.5 1737,871.5 1752,871.5" fill="none" stroke="#7a3898" stroke-width="1.3" stroke-linejoin="miter"/><path d="M764,760H766V854.95H764ZM765,854.95H766V968H765ZM770,760H772V854.44H770ZM771,854.44H772V969H771ZM776,760H778V853.89H776ZM777,853.89H778V970H777ZM785,760H787V853.11H785ZM786,853.11H787V967H786ZM791,760H793V852.54H791ZM792,852.54H793V963H792ZM801,760H803V851.67H801ZM802,851.67H803V963H802ZM812,760H814V850.73H812ZM813,850.73H814V958H813ZM820,760H822V850.02H820ZM821,850.02H822V960H821ZM828,760H830V849.31H828ZM829,849.31H830V955H829ZM838,760H840V848.42H838ZM839,848.42H840V952H839ZM853,760H855V847.08H853ZM854,847.08H855V947H854ZM865,760H867V845.99H865ZM866,845.99H867V946H866ZM881,760H883V844.53H881ZM882,844.53H883V944H882Z" fill="#7a3898"/><path d="M1710,65H1742Q1744,65 1744,67V99Z" fill="#4e4e4e"/><circle cx="1737" cy="71.5" r="4.3" fill="none" stroke="#a0a0a0" stroke-width="1.5"/><line x1="1733.8" y1="74.8" x2="1727.8" y2="80.8" stroke="#a0a0a0" stroke-width="2.2" stroke-linecap="round"/><path d="M45,58.5H65L55,67.5Z" fill="#f28c28"/><path d="M46,69H64V88H59L55,94L51,88H46Z" fill="#000" stroke="#f28c28" stroke-width="2"/><path d="M50.2,73.8H59.8M55,73.8V84.5" stroke="#f28c28" stroke-width="2.7"/><path d="M9,161.7 H74 L84,174.6 L74,187.5 H9 Q6,187.5 6,184.5 V164.7 Q6,161.7 9,161.7 Z" fill="#1c1a08" stroke="#ece43a" stroke-width="2"/><line x1="33" y1="161.7" x2="33" y2="187.5" stroke="#ece43a" stroke-width="2"/><text x="19.5" y="179" text-anchor="middle" font-size="12" fill="#ece43a">C 1</text><text x="57" y="179.1" text-anchor="middle" font-size="12.4" fill="#ece43a">20 V</text><text x="102" y="178.6" font-size="18.5" letter-spacing="0.55" fill="#f2ec3a">U_loop,coil</text><path d="M9,395.3 H74 L84,408.2 L74,421.1 H9 Q6,421.1 6,418.1 V398.3 Q6,395.3 9,395.3 Z" fill="#141c08" stroke="#8cc63f" stroke-width="2"/><line x1="33" y1="395.3" x2="33" y2="421.1" stroke="#8cc63f" stroke-width="2"/><text x="19.5" y="412.6" text-anchor="middle" font-size="12" fill="#8cc63f">C 4</text><text x="57" y="412.7" text-anchor="middle" font-size="12.4" fill="#8cc63f">200 mV</text><text x="102" y="412.6" font-size="18.5" letter-spacing="0.6" fill="#8cc63f">U_Photod</text><rect x="3" y="734.5" width="4" height="2" fill="#ee8f22"/><path d="M9,722.4 H30 L42,735 L30,747.6 H9 Q6,747.6 6,744.6 V725.4 Q6,722.4 9,722.4 Z" fill="#1e1306" stroke="#ee8f22" stroke-width="1.6"/><text x="23" y="739.5" text-anchor="middle" font-size="12.5" fill="#ee8f22">M 1</text><text x="54" y="739.6" font-size="18" fill="#ee8f22">B_t</text><rect x="3" y="799" width="4" height="2" fill="#7d3a9c"/><path d="M9,787.4 H30 L42,800 L30,812.6 H9 Q6,812.6 6,809.6 V790.4 Q6,787.4 9,787.4 Z" fill="#6e2c8e" stroke="#6e2c8e" stroke-width="1.6"/><text x="23" y="804.5" text-anchor="middle" font-size="12.5" fill="#ffffff">M 2</text><text x="55" y="804.6" font-size="18" fill="#74389a">I_p</text><circle cx="1762" cy="503" r="2.2" fill="#c8c8c8"/><circle cx="1762" cy="512" r="2.2" fill="#c8c8c8"/><circle cx="1762" cy="521" r="2.2" fill="#c8c8c8"/></svg><svg class="a" style="left:0;top:0" width="1920" height="30"><g fill="#fff"><path d="M1785.8,4H1803.9L1800.8,9H1796.1V25.8H1790.5V9H1785.8Z"/><ellipse cx="1805.9" cy="17.9" rx="8.2" ry="8"/><rect x="1815" y="4" width="5" height="21.8"/><path d="M1822.5,19.6L1826.2,16.8L1830.8,25.8H1823.6Z"/><path d="M1831.7,11L1836.3,4.5V25.8H1831.7Z"/><rect x="1831" y="9.3" width="7.3" height="4.6"/><path d="M1839.8,25.8V10H1845V11.6Q1846.2,10 1848.2,10V14.4Q1845.2,14.4 1845,17V25.8Z"/><path d="M1866,25.8V10H1871V11.4Q1872.8,9.7 1875.3,9.7Q1880,9.7 1880,15.2V25.8H1875V16.3Q1875,14.4 1873.2,14.4Q1871,14.4 1871,16.8V25.8Z"/><rect x="1882" y="10" width="5" height="15.8"/><circle cx="1884.5" cy="6.6" r="2.7"/><path d="M1888,10H1894L1895.5,12.8L1897,10H1903L1898.4,17.9L1903,25.8H1897L1895.5,23L1894,25.8H1888L1892.6,17.9Z"/></g><ellipse cx="1856.5" cy="17.9" rx="5.7" ry="5.5" fill="none" stroke="#fff" stroke-width="5"/><path d="M1803,16Q1806,12.6 1809,16Z" fill="#2e2e2e"/><path d="M1803.3,19.7H1814.5V21.7H1806Q1803.5,21.7 1803.3,19.7Z" fill="#2e2e2e"/><path d="M1815,25.8H1821L1831,9.3H1825.3Z" fill="#1ab9dc"/></svg><div class="a" style="left:1769px;top:29px;width:151px;height:967px;border-left:1px solid #585858;border-top:1px solid #6a6058;border-bottom:1px solid #6a6058"></div><div class="a" style="left:1769px;top:29px;width:151px;text-align:center;font-size:15.5px;font-weight:bold;color:#eeeeee;line-height:18px;letter-spacing:0.6px">Add New...</div><div class="btn" style="left:1778px;top:54px">Cursors</div><div class="btn" style="left:1850px;top:54px">Callout</div><div class="btn" style="left:1778px;top:100px">Measure</div><div class="btn" style="left:1850px;top:100px">Search</div><div class="btn" style="left:1850px;top:146px">Plot</div><div class="btn" style="left:1850px;top:196px">More...</div><div class="btn" style="left:1778px;top:146px;line-height:16px;padding-top:2px">Results<br>Table</div><div class="btn" style="left:1778px;top:196px"><svg width="61" height="35" style="position:absolute;left:0;top:0"><rect x="19.5" y="6.5" width="22.5" height="19.5" fill="none" stroke="#b4b4b4" stroke-width="1.8" stroke-dasharray="2.2 2.2"/><circle cx="32" cy="14" r="4.6" fill="none" stroke="#b4b4b4" stroke-width="1.8"/><line x1="28.6" y1="17.4" x2="24.5" y2="21.5" stroke="#b4b4b4" stroke-width="2.4" stroke-linecap="round"/><path d="M37,20L45,24.5L41.5,25.5L44,29L42.5,30L40,26.5L37.5,29Z" fill="#b4b4b4"/></svg></div><div class="a" style="left:1773px;top:189px;width:144px;height:1px;background:#6a6058"></div><div class="a" style="left:1773px;top:241px;width:144px;height:1px;background:#6a6058"></div><div class="bg" style="left:3px;background:#c8c8c8"><div class="h" style="background:#4b4520;color:#f6ee22;font-size:14.5px;letter-spacing:-0.5px">Ch 1</div><div class="r" style="top:20px">5 V/div</div><div class="r" style="top:39px">1 M&Omega;</div><div class="r" style="top:58px">200 kHz</div><div class="r" style="left:72px;top:57px;font-size:9.5px;line-height:10px">B<sub style="font-size:9.5px;vertical-align:-3px">w</sub></div></div><div class="bg" style="left:98px;background:#868686"><div class="h" style="background:#247e83;color:#1c1c1c;font-size:14.5px;letter-spacing:-0.5px">Ch 2</div><div class="r" style="top:20px">250 mV/div</div><div class="r" style="top:39px">1 M&Omega;</div><div class="r" style="top:58px">200 kHz</div><div class="r" style="left:72px;top:57px;font-size:9.5px;line-height:10px">B<sub style="font-size:9.5px;vertical-align:-3px">w</sub></div></div><div class="bg" style="left:193px;background:#868686"><div class="h" style="background:#8a3747;color:#b8b8b8;font-size:14.5px;letter-spacing:-0.5px">Ch 3</div><div class="r" style="top:20px">450 mV/div</div><div class="r" style="top:39px">1 M&Omega;</div><div class="r" style="top:58px">200 kHz</div><div class="r" style="left:72px;top:57px;font-size:9.5px;line-height:10px">B<sub style="font-size:9.5px;vertical-align:-3px">w</sub></div></div><div class="bg" style="left:288px;background:#c8c8c8"><div class="h" style="background:#34441e;color:#8ed22e;font-size:14.5px;letter-spacing:-0.5px">Ch 4</div><div class="r" style="top:20px">200 mV/div</div><div class="r" style="top:39px">1 M&Omega;</div><div class="r" style="top:58px">200 kHz</div><div class="r" style="left:72px;top:57px;font-size:9.5px;line-height:10px">B<sub style="font-size:9.5px;vertical-align:-3px">w</sub></div></div><div class="bg" style="left:383px;background:#c8c8c8"><div class="h" style="background:#4a311b;color:#f2982a;">Math 1</div><div class="r" style="top:20px">1.24 mT/div</div><div class="r" style="top:39px">Intg(Ch2)&hellip;</div></div><div class="bg" style="left:478px;background:#c8c8c8"><div class="h" style="background:#6b2b8c;color:#ffffff;">Math 2</div><div class="r" style="top:20px">279.64 A/div</div><div class="r" style="top:39px">-Intg(Ch3&hellip;</div></div><div class="bb" style="left:1023px"><i style="background:#f2a030"></i><p style="top:34.5px;font-size:19px;line-height:20px">5</p></div><div class="bb" style="left:1068px"><i style="background:#3434d8"></i><p style="top:34.5px;font-size:19px;line-height:20px">6</p></div><div class="a" style="left:1118px;top:1000px;width:1px;height:77px;background:#4e4844"></div><div class="bb" style="left:1129px"><i style="background:#c02424"></i><p>Add<br>New<br>Math</p></div><div class="bb" style="left:1174px"><i style="background:#c4c4cc"></i><p>Add<br>New<br>Ref</p></div><div class="bb" style="left:1219px"><i style="background:#c444e8"></i><p>Add<br>New<br>Bus</p></div><div class="a" style="left:1269px;top:1000px;width:1px;height:77px;background:#4e4844"></div><div class="pb" style="left:1281px;width:198px"><div class="h">Horizontal</div><div class="r" style="left:4px;top:20px">4 ms/div</div><div class="r" style="left:110px;top:20px">40 ms</div><div class="r" style="left:4px;top:39px">SR: 1 MS/s</div><div class="r" style="left:111px;top:39px">1 &micro;s/pt</div><div class="r" style="left:4px;top:58px">RL: 40 kpts</div><div class="r" style="left:124px;top:58px">3%</div><svg style="position:absolute;left:109px;top:60px" width="12" height="14"><path d="M1,1H10V10H7L5.5,13L4,10H1Z" fill="#000" stroke="#f28c28" stroke-width="1.6"/><path d="M3.3,3.3H7.7M5.5,3.3V8.5" stroke="#f28c28" stroke-width="1.6"/></svg></div><div class="pb" style="left:1486px;width:158px"><div class="h">Trigger</div><div class="a" style="left:4px;top:22px;width:30px;height:15px;background:#2626c4;border:1px solid #10104a;border-radius:5px;color:#fff;font-size:14px;line-height:13px;text-align:center">6</div><svg style="position:absolute;left:44px;top:22px" width="18" height="14"><path d="M1,12H4L12,2H16" fill="none" stroke="#3a3ab4" stroke-width="1.3"/></svg><div class="r" style="left:70px;top:20px">3 V</div></div><div class="pb" style="left:1651px;width:148px"><div class="h">Acquisition</div><div class="r" style="left:4px;top:20px">Manual,</div><div class="r" style="left:85px;top:20px">Analyze</div><div class="r" style="left:4px;top:39px">High Res: 16 bits</div><div class="r" style="left:4px;top:58px">Single: 0 /1</div></div><div class="a" style="left:1811px;top:1000px;width:1px;height:77px;background:#4e4844"></div><div class="a" style="left:1822px;top:999px;width:90px;height:36px;background:#fa1c25;border:1px solid #9a5050;border-radius:6px;color:#fff;font-weight:bold;font-size:14px;line-height:31px;text-align:center">Preview</div><div class="a" style="left:1822px;top:1040px;width:90px;height:37px;background:#c8c8c8;border:1px solid #9a9a9a;border-radius:4px;color:#141414;font-size:15px;line-height:16.5px;text-align:center;padding-top:0px">15 May 2025<br>4:21:54 PM</div></body></html>
